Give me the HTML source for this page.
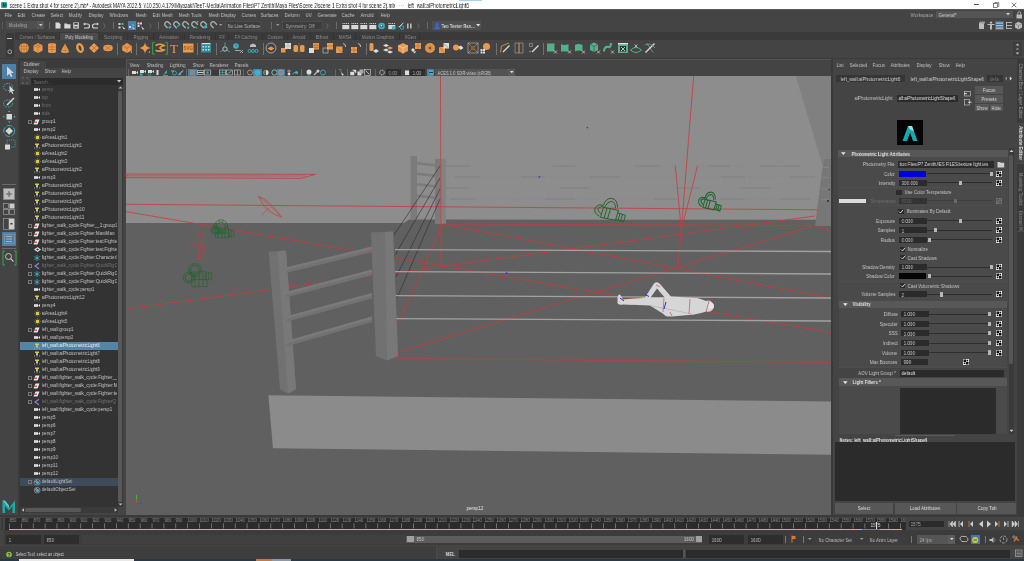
<!DOCTYPE html>
<html><head><meta charset="utf-8">
<style>
*{box-sizing:border-box;margin:0;padding:0}
html,body{width:1024px;height:561px;overflow:hidden;background:#444;font-family:"Liberation Sans",sans-serif;position:relative}
.a{position:absolute}
.t{position:absolute;white-space:nowrap;line-height:1;will-change:transform;padding:0 1.5px}
svg{overflow:visible}
</style></head><body>
<div class="a" style="left:0px;top:0px;width:1024px;height:9px;background:#ffffff;"></div>
<div class="a" style="left:1px;top:2px;width:6px;height:6px;background:#27a59f;border-radius:1px"></div>
<span class="t" style="left:0.70px;top:2.50px;font-size:5px;color:#0a3a3a;font-weight:bold;transform:scaleX(0.9);transform-origin:1.5px 0;">M</span>
<span class="t" style="left:7.50px;top:1.50px;font-size:7px;color:#1a1a1a;transform:scaleX(0.672);transform-origin:1.5px 0;">scene 1 Extra shot 4 for scene 2).mb* - Autodesk MAYA 2022.5: \\10.250.4.179\Miyazaki\TeeT-Media\Animation Files\P7 Zenith\Maya Files\Scene 2\scene 1 Extra shot 4 for scene 2).mb</span>
<span class="t" style="left:396.50px;top:2.00px;font-size:6px;color:#777;transform:scaleX(1.0);transform-origin:1.5px 0;">···</span>
<div class="a" style="left:458.5px;top:0px;width:23.5px;height:1px;background:#a8d0f0;"></div>
<span class="t" style="left:405.50px;top:1.50px;font-size:7px;color:#1a1a1a;transform:scaleX(0.69);transform-origin:1.5px 0;">left_wall:aiPhotometricLight6</span>
<div class="a" style="left:974px;top:4px;width:5px;height:0.8px;background:#555;"></div>
<svg class="a" style="left:993px;top:2px;" width="7" height="6" viewBox="0 0 7 6"><rect x="0.5" y="1.5" width="4" height="4" fill="none" stroke="#555" stroke-width="0.7"/><path d="M1.8 1.5V0.5H5.8V4.5H4.5" stroke="#555" stroke-width="0.7" fill="none"/></svg>
<svg class="a" style="left:1011px;top:2px;" width="6" height="6" viewBox="0 0 6 6"><path d="M0.7 0.7L5.3 5.3M5.3 0.7L0.7 5.3" stroke="#444" stroke-width="0.7"/></svg>
<div class="a" style="left:0px;top:9px;width:1024px;height:12px;background:#444444;"></div>
<div class="a" style="left:0px;top:9px;width:1024px;height:1px;background:#5a5a5a;"></div>
<span class="t" style="left:2.50px;top:13.00px;font-size:5.6px;color:#c0c0c0;transform:scaleX(0.8142857142857144);transform-origin:1.5px 0;">File</span>
<span class="t" style="left:15.50px;top:13.00px;font-size:5.6px;color:#c0c0c0;transform:scaleX(0.8142857142857144);transform-origin:1.5px 0;">Edit</span>
<span class="t" style="left:29.50px;top:13.00px;font-size:5.6px;color:#c0c0c0;transform:scaleX(0.8142857142857144);transform-origin:1.5px 0;">Create</span>
<span class="t" style="left:48.50px;top:13.00px;font-size:5.6px;color:#c0c0c0;transform:scaleX(0.8142857142857144);transform-origin:1.5px 0;">Select</span>
<span class="t" style="left:66.50px;top:13.00px;font-size:5.6px;color:#c0c0c0;transform:scaleX(0.8142857142857144);transform-origin:1.5px 0;">Modify</span>
<span class="t" style="left:86.50px;top:13.00px;font-size:5.6px;color:#c0c0c0;transform:scaleX(0.8142857142857144);transform-origin:1.5px 0;">Display</span>
<span class="t" style="left:107.50px;top:13.00px;font-size:5.6px;color:#c0c0c0;transform:scaleX(0.8142857142857144);transform-origin:1.5px 0;">Windows</span>
<span class="t" style="left:133.50px;top:13.00px;font-size:5.6px;color:#c0c0c0;transform:scaleX(0.8142857142857144);transform-origin:1.5px 0;">Mesh</span>
<span class="t" style="left:150.50px;top:13.00px;font-size:5.6px;color:#c0c0c0;transform:scaleX(0.8142857142857144);transform-origin:1.5px 0;">Edit Mesh</span>
<span class="t" style="left:176.50px;top:13.00px;font-size:5.6px;color:#c0c0c0;transform:scaleX(0.8142857142857144);transform-origin:1.5px 0;">Mesh Tools</span>
<span class="t" style="left:206.50px;top:13.00px;font-size:5.6px;color:#c0c0c0;transform:scaleX(0.8142857142857144);transform-origin:1.5px 0;">Mesh Display</span>
<span class="t" style="left:239.50px;top:13.00px;font-size:5.6px;color:#c0c0c0;transform:scaleX(0.8142857142857144);transform-origin:1.5px 0;">Curves</span>
<span class="t" style="left:258.50px;top:13.00px;font-size:5.6px;color:#c0c0c0;transform:scaleX(0.8142857142857144);transform-origin:1.5px 0;">Surfaces</span>
<span class="t" style="left:282.50px;top:13.00px;font-size:5.6px;color:#c0c0c0;transform:scaleX(0.8142857142857144);transform-origin:1.5px 0;">Deform</span>
<span class="t" style="left:303.50px;top:13.00px;font-size:5.6px;color:#c0c0c0;transform:scaleX(0.8142857142857144);transform-origin:1.5px 0;">UV</span>
<span class="t" style="left:315.50px;top:13.00px;font-size:5.6px;color:#c0c0c0;transform:scaleX(0.8142857142857144);transform-origin:1.5px 0;">Generate</span>
<span class="t" style="left:339.50px;top:13.00px;font-size:5.6px;color:#c0c0c0;transform:scaleX(0.8142857142857144);transform-origin:1.5px 0;">Cache</span>
<span class="t" style="left:358.50px;top:13.00px;font-size:5.6px;color:#c0c0c0;transform:scaleX(0.8142857142857144);transform-origin:1.5px 0;">Arnold</span>
<span class="t" style="left:378.50px;top:13.00px;font-size:5.6px;color:#c0c0c0;transform:scaleX(0.8142857142857144);transform-origin:1.5px 0;">Help</span>
<span class="t" style="left:908.50px;top:13.00px;font-size:5.6px;color:#a8a8a8;transform:scaleX(0.8142857142857144);transform-origin:1.5px 0;">Workspace:</span>
<div class="a" style="left:936px;top:11px;width:77px;height:7px;background:#555555;"></div>
<span class="t" style="left:936.50px;top:12.80px;font-size:5.6px;color:#cccccc;transform:scaleX(0.8142857142857144);transform-origin:1.5px 0;">General*</span>
<svg class="a" style="left:1006px;top:13px;" width="5" height="3" viewBox="0 0 5 3"><path d="M0 0H4L2 2.5Z" fill="#ccc"/></svg>
<svg class="a" style="left:1016px;top:11px;" width="7" height="8" viewBox="0 0 7 8"><rect x="0.5" y="3.5" width="5.5" height="4" fill="#bbb"/><path d="M1.8 3.6V2.2A1.45 1.45 0 0 1 4.7 2.2V3.6" stroke="#bbb" fill="none" stroke-width="0.9"/></svg>
<div class="a" style="left:0px;top:21px;width:1024px;height:10px;background:#444444;"></div>
<div class="a" style="left:2px;top:22px;width:1px;height:7px;background:#5a5a5a;"></div>
<div class="a" style="left:6px;top:21px;width:38px;height:8px;background:#4f4f4f;"></div>
<div class="a" style="left:37px;top:21px;width:7px;height:8px;background:#575757;"></div>
<span class="t" style="left:6.50px;top:23.00px;font-size:5.6px;color:#a8a8a8;transform:scaleX(0.8142857142857144);transform-origin:1.5px 0;">Modeling</span>
<svg class="a" style="left:39px;top:24px;" width="4" height="3" viewBox="0 0 4 3"><path d="M0 0H3.6L1.8 2.2Z" fill="#ccc"/></svg>
<div class="a" style="left:49px;top:22px;width:1px;height:7px;background:#6a6a6a;"></div>
<svg class="a" style="left:55px;top:22px;" width="6" height="7" viewBox="0 0 6 7"><path d="M0.5 0.5H3.8L5.5 2.2V6.5H0.5Z" fill="#d8d8d8"/></svg>
<svg class="a" style="left:64px;top:23px;" width="7" height="6" viewBox="0 0 7 6"><path d="M0.3 0.5H2.8L3.5 1.3H6.5V5.5H0.3Z" fill="#d8d8d8"/></svg>
<svg class="a" style="left:73px;top:22px;" width="6" height="7" viewBox="0 0 6 7"><rect x="0.3" y="0.3" width="5.5" height="6.3" fill="#d8d8d8"/><rect x="1.3" y="0.8" width="3.4" height="2" fill="#444"/><rect x="1.5" y="4" width="3" height="2" fill="#777"/></svg>
<svg class="a" style="left:83px;top:23px;" width="7" height="6" viewBox="0 0 7 6"><path d="M2 1H4.5A2 2 0 0 1 4.5 5H1" stroke="#d8d8d8" fill="none" stroke-width="1.1"/><path d="M0 1L2.2 -0.5V2.5Z" fill="#d8d8d8"/></svg>
<svg class="a" style="left:92px;top:23px;" width="7" height="6" viewBox="0 0 7 6"><path d="M5 1H2.5A2 2 0 0 0 2.5 5H6" stroke="#d8d8d8" fill="none" stroke-width="1.1"/><path d="M7 1L4.8 -0.5V2.5Z" fill="#d8d8d8"/></svg>
<svg class="a" style="left:103px;top:23px;" width="3" height="6" viewBox="0 0 3 6"><path d="M0.5 0.5L2.2 3L0.5 5.5" stroke="#777" stroke-width="0.7" fill="none"/></svg>
<div class="a" style="left:113px;top:22px;width:1px;height:7px;background:#6a6a6a;"></div>
<svg class="a" style="left:118px;top:22px;" width="8" height="8" viewBox="0 0 8 8"><rect x="0.5" y="1" width="2" height="2" fill="#d8d8d8"/><rect x="0.5" y="4.5" width="2" height="2" fill="#d8d8d8"/><rect x="3.5" y="1" width="2" height="2" fill="#39b5c4"/><path d="M4 4L7.5 7L5.5 7.2Z" fill="#d8d8d8"/></svg>
<div class="a" style="left:128px;top:21px;width:8px;height:9px;background:#4f7fa6;"></div>
<svg class="a" style="left:128px;top:22px;" width="8" height="8" viewBox="0 0 8 8"><rect x="1" y="4" width="2" height="2" fill="#d8d8d8"/><rect x="4" y="2" width="2" height="2" fill="#39b5c4"/><path d="M4 4.5L7 7L5 7Z" fill="#d8d8d8"/></svg>
<svg class="a" style="left:137px;top:22px;" width="8" height="8" viewBox="0 0 8 8"><rect x="0.5" y="0.5" width="2" height="2" fill="#d8d8d8"/><rect x="3" y="0.5" width="2" height="2" fill="#d8d8d8"/><rect x="0.5" y="3" width="2" height="2" fill="#d8d8d8"/><path d="M4 4L7.5 7.3L5.5 7.5Z" fill="#d8d8d8"/></svg>
<svg class="a" style="left:149px;top:23px;" width="3" height="6" viewBox="0 0 3 6"><path d="M0.5 0.5L2.2 3L0.5 5.5" stroke="#777" stroke-width="0.7" fill="none"/></svg>
<div class="a" style="left:158px;top:22px;width:1px;height:7px;background:#6a6a6a;"></div>
<svg class="a" style="left:163.5px;top:21px;" width="8" height="8" viewBox="0 0 8 8"><path d="M3.6 7L1.4 4.8A2.3 2.3 0 0 1 4.7 1.5L6.9 3.7" stroke="#b0b0b0" stroke-width="1.3" fill="none"/><path d="M4 6.5L6.5 4.5L7.5 6.5L5.5 7.8Z" fill="#39b5c4"/></svg>
<svg class="a" style="left:172.9px;top:21px;" width="8" height="8" viewBox="0 0 8 8"><path d="M3.6 7L1.4 4.8A2.3 2.3 0 0 1 4.7 1.5L6.9 3.7" stroke="#b0b0b0" stroke-width="1.3" fill="none"/><path d="M4.2 5.8L7.5 2.8" stroke="#39b5c4" stroke-width="1.1"/><circle cx="3.5" cy="7" r="0.7" fill="#39b5c4"/></svg>
<svg class="a" style="left:181.6px;top:21px;" width="8" height="8" viewBox="0 0 8 8"><path d="M3.6 7L1.4 4.8A2.3 2.3 0 0 1 4.7 1.5L6.9 3.7" stroke="#b0b0b0" stroke-width="1.3" fill="none"/><rect x="5.2" y="5.6" width="2" height="2" fill="#39b5c4"/></svg>
<svg class="a" style="left:191px;top:21px;" width="8" height="8" viewBox="0 0 8 8"><path d="M3.6 7L1.4 4.8A2.3 2.3 0 0 1 4.7 1.5L6.9 3.7" stroke="#b0b0b0" stroke-width="1.3" fill="none"/><path d="M5 5L6.5 7.5L4 6.8Z" fill="#39b5c4"/><rect x="5.8" y="0" width="1.6" height="1.6" fill="#39b5c4"/></svg>
<svg class="a" style="left:200.4px;top:21px;" width="8" height="8" viewBox="0 0 8 8"><path d="M3.6 7L1.4 4.8A2.3 2.3 0 0 1 4.7 1.5L6.9 3.7" stroke="#b0b0b0" stroke-width="1.3" fill="none"/><path d="M3.5 5.5L6.5 3.5L7.5 6.5L5 7.8Z" fill="#39b5c4"/></svg>
<svg class="a" style="left:209.75px;top:21px;" width="8" height="8" viewBox="0 0 8 8"><path d="M3.6 7L1.4 4.8A2.3 2.3 0 0 1 4.7 1.5L6.9 3.7" stroke="#b0b0b0" stroke-width="1.3" fill="none"/></svg>
<svg class="a" style="left:219px;top:24px;" width="4" height="3" viewBox="0 0 4 3"><path d="M0 0H3.5L1.75 2Z" fill="#999"/></svg>
<div class="a" style="left:225px;top:21px;width:36px;height:9px;background:#3d3d3d;border:1px solid #4c4c4c"></div>
<span class="t" style="left:225.50px;top:23.50px;font-size:5.6px;color:#bdbdbd;transform:scaleX(0.8142857142857144);transform-origin:1.5px 0;">No Live Surface</span>
<div class="a" style="left:270.5px;top:22px;width:1px;height:7px;background:#6a6a6a;"></div>
<svg class="a" style="left:276px;top:24px;" width="4" height="3" viewBox="0 0 4 3"><path d="M0 0H3.5L1.75 2Z" fill="#999"/></svg>
<div class="a" style="left:282px;top:21px;width:41px;height:9px;background:#3d3d3d;border:1px solid #4c4c4c"></div>
<span class="t" style="left:283.50px;top:23.50px;font-size:5.6px;color:#a8a8a8;transform:scaleX(0.8142857142857144);transform-origin:1.5px 0;">Symmetry: Off</span>
<svg class="a" style="left:326px;top:23px;" width="3" height="6" viewBox="0 0 3 6"><path d="M0.5 0.5L2.2 3L0.5 5.5" stroke="#777" stroke-width="0.7" fill="none"/></svg>
<div class="a" style="left:336px;top:22px;width:1px;height:7px;background:#6a6a6a;"></div>
<svg class="a" style="left:342px;top:22px;" width="8" height="8" viewBox="0 0 8 8"><path d="M0.5 1.5H7" stroke="#d8d8d8" stroke-width="1" stroke-dasharray="1 0.8"/><rect x="0.3" y="3" width="7" height="4.2" fill="#d8d8d8"/></svg>
<svg class="a" style="left:351px;top:22px;" width="8" height="8" viewBox="0 0 8 8"><path d="M0.5 1.5H7" stroke="#d8d8d8" stroke-width="1" stroke-dasharray="1 0.8"/><rect x="0.3" y="3" width="7" height="4.2" fill="#d8d8d8"/></svg>
<svg class="a" style="left:360px;top:22px;" width="8" height="8" viewBox="0 0 8 8"><path d="M0.5 1.5H7" stroke="#d8d8d8" stroke-width="1" stroke-dasharray="1 0.8"/><rect x="0.3" y="3" width="7" height="4.2" fill="#d8d8d8"/></svg>
<svg class="a" style="left:369px;top:22px;" width="8" height="8" viewBox="0 0 8 8"><path d="M0.5 1.5H7" stroke="#d8d8d8" stroke-width="1" stroke-dasharray="1 0.8"/><rect x="0.3" y="3" width="7" height="4.2" fill="#d8d8d8"/></svg>
<svg class="a" style="left:378px;top:22px;" width="8" height="8" viewBox="0 0 8 8"><circle cx="3.6" cy="4" r="3.3" fill="#39b5c4"/><circle cx="3.6" cy="4" r="1.7" fill="#3a6a70"/><circle cx="3.4" cy="3.6" r="0.8" fill="#eee"/></svg>
<svg class="a" style="left:388px;top:22px;" width="8" height="8" viewBox="0 0 8 8"><path d="M0.5 1.5H7" stroke="#d8d8d8" stroke-width="1" stroke-dasharray="1 0.8"/><rect x="0.3" y="3" width="7" height="4.2" fill="#d8d8d8"/><circle cx="5.5" cy="5.8" r="1.8" fill="#39b5c4"/></svg>
<svg class="a" style="left:397px;top:22px;" width="8" height="8" viewBox="0 0 8 8"><path d="M2 5L6.5 0.8" stroke="#d8d8d8" stroke-width="1"/><circle cx="5" cy="5.5" r="1.8" fill="none" stroke="#39b5c4" stroke-width="0.9"/><circle cx="1.2" cy="4.8" r="0.6" fill="#39b5c4"/></svg>
<svg class="a" style="left:406px;top:22px;" width="7" height="8" viewBox="0 0 7 8"><rect x="1" y="1.5" width="1.6" height="5" fill="#bbb"/><rect x="4" y="1.5" width="1.6" height="5" fill="#bbb"/></svg>
<svg class="a" style="left:417px;top:23px;" width="3" height="6" viewBox="0 0 3 6"><path d="M0.5 0.5L2.2 3L0.5 5.5" stroke="#777" stroke-width="0.7" fill="none"/></svg>
<div class="a" style="left:427px;top:22px;width:1px;height:7px;background:#6a6a6a;"></div>
<div class="a" style="left:432px;top:21px;width:49px;height:9px;background:#4f4f4f;"></div>
<svg class="a" style="left:434px;top:22px;" width="6" height="8" viewBox="0 0 6 8"><circle cx="3" cy="2.5" r="1.8" fill="#3f64c8"/><path d="M0.3 7.5V6A2.7 2 0 0 1 5.7 6V7.5Z" fill="#3f64c8"/></svg>
<span class="t" style="left:439.50px;top:23.50px;font-size:5.6px;color:#d0d0d0;font-weight:bold;transform:scaleX(0.7499999999999999);transform-origin:1.5px 0;">Teo Teeter Ran...</span>
<svg class="a" style="left:475.5px;top:24px;" width="5" height="3" viewBox="0 0 5 3"><path d="M0 0H4.4L2.2 2.4Z" fill="#ddd"/></svg>
<svg class="a" style="left:978px;top:21px;" width="8" height="9" viewBox="0 0 8 9"><rect x="1" y="1.5" width="5" height="6.5" fill="#bbb"/><rect x="2" y="0.5" width="5" height="2" fill="#999"/></svg>
<svg class="a" style="left:987px;top:21px;" width="8" height="9" viewBox="0 0 8 9"><circle cx="4" cy="1.6" r="1.2" fill="#bbb"/><path d="M0.5 3H7.5V4H5V8.5H3V4H0.5Z" fill="#bbb"/></svg>
<div class="a" style="left:995px;top:21px;width:9px;height:9px;background:#456f93;"></div>
<svg class="a" style="left:995px;top:21px;" width="9" height="9" viewBox="0 0 9 9"><rect x="1" y="1.5" width="7" height="1.3" fill="#bbb"/><rect x="1" y="4" width="7" height="1.3" fill="#bbb"/><rect x="1" y="6.5" width="7" height="1.3" fill="#bbb"/></svg>
<svg class="a" style="left:1005px;top:21px;" width="8" height="9" viewBox="0 0 8 9"><path d="M1 1.5H7M1 4.5H7M1 7.5H7M1.5 1V8" stroke="#bbb" stroke-width="0.9"/></svg>
<svg class="a" style="left:1014px;top:21px;" width="9" height="9" viewBox="0 0 9 9"><path d="M4.5 0.8L8 2.7V6.6L4.5 8.5L1 6.6V2.7Z" fill="#bbb"/><path d="M1 2.7L4.5 4.6L8 2.7M4.5 4.6V8.5" stroke="#777" stroke-width="0.6" fill="none"/></svg>
<div class="a" style="left:0px;top:32px;width:1024px;height:27px;background:#444444;"></div>
<div class="a" style="left:0px;top:58px;width:1024px;height:1px;background:#3a3a3a;"></div>
<div class="a" style="left:15px;top:32.3px;width:1009px;height:7.7px;background:#3a3a3a;"></div>
<div class="a" style="left:6px;top:33px;width:8px;height:24px;background:#393939;"></div>
<div class="a" style="left:7px;top:37.5px;width:5px;height:1.2px;background:#bbb;"></div>
<svg class="a" style="left:7px;top:49px;" width="6" height="6" viewBox="0 0 6 6"><circle cx="2.8" cy="2.8" r="1.9" fill="none" stroke="#bbb" stroke-width="0.8"/></svg>
<div class="a" style="left:59px;top:33px;width:1px;height:7px;background:#333;"></div>
<span class="t" style="left:37.0px;top:34.80px;font-size:5.6px;color:#8e8e8e;transform:translateX(-50%) scaleX(0.7928571428571428);transform-origin:50% 0;">Curves / Surfaces</span>
<div class="a" style="left:60px;top:33px;width:38px;height:7px;background:#4b4b4b;"></div>
<span class="t" style="left:79.0px;top:34.80px;font-size:5.6px;color:#d0d0d0;transform:translateX(-50%) scaleX(0.7928571428571428);transform-origin:50% 0;">Poly Modeling</span>
<div class="a" style="left:127px;top:33px;width:1px;height:7px;background:#333;"></div>
<span class="t" style="left:113.0px;top:34.80px;font-size:5.6px;color:#8e8e8e;transform:translateX(-50%) scaleX(0.7928571428571428);transform-origin:50% 0;">Sculpting</span>
<div class="a" style="left:153px;top:33px;width:1px;height:7px;background:#333;"></div>
<span class="t" style="left:140.5px;top:34.80px;font-size:5.6px;color:#8e8e8e;transform:translateX(-50%) scaleX(0.7928571428571428);transform-origin:50% 0;">Rigging</span>
<div class="a" style="left:184px;top:33px;width:1px;height:7px;background:#333;"></div>
<span class="t" style="left:169.0px;top:34.80px;font-size:5.6px;color:#8e8e8e;transform:translateX(-50%) scaleX(0.7928571428571428);transform-origin:50% 0;">Animation</span>
<div class="a" style="left:215px;top:33px;width:1px;height:7px;background:#333;"></div>
<span class="t" style="left:200.0px;top:34.80px;font-size:5.6px;color:#8e8e8e;transform:translateX(-50%) scaleX(0.7928571428571428);transform-origin:50% 0;">Rendering</span>
<div class="a" style="left:228px;top:33px;width:1px;height:7px;background:#333;"></div>
<span class="t" style="left:222.0px;top:34.80px;font-size:5.6px;color:#8e8e8e;transform:translateX(-50%) scaleX(0.7928571428571428);transform-origin:50% 0;">FX</span>
<div class="a" style="left:262px;top:33px;width:1px;height:7px;background:#333;"></div>
<span class="t" style="left:245.5px;top:34.80px;font-size:5.6px;color:#8e8e8e;transform:translateX(-50%) scaleX(0.7928571428571428);transform-origin:50% 0;">FX Caching</span>
<div class="a" style="left:287px;top:33px;width:1px;height:7px;background:#333;"></div>
<span class="t" style="left:275.0px;top:34.80px;font-size:5.6px;color:#8e8e8e;transform:translateX(-50%) scaleX(0.7928571428571428);transform-origin:50% 0;">Custom</span>
<div class="a" style="left:310px;top:33px;width:1px;height:7px;background:#333;"></div>
<span class="t" style="left:299.0px;top:34.80px;font-size:5.6px;color:#8e8e8e;transform:translateX(-50%) scaleX(0.7928571428571428);transform-origin:50% 0;">Arnold</span>
<div class="a" style="left:333px;top:33px;width:1px;height:7px;background:#333;"></div>
<span class="t" style="left:322.0px;top:34.80px;font-size:5.6px;color:#8e8e8e;transform:translateX(-50%) scaleX(0.7928571428571428);transform-origin:50% 0;">Bifrost</span>
<div class="a" style="left:355px;top:33px;width:1px;height:7px;background:#333;"></div>
<span class="t" style="left:344.5px;top:34.80px;font-size:5.6px;color:#8e8e8e;transform:translateX(-50%) scaleX(0.7928571428571428);transform-origin:50% 0;">MASH</span>
<div class="a" style="left:399px;top:33px;width:1px;height:7px;background:#333;"></div>
<span class="t" style="left:377.5px;top:34.80px;font-size:5.6px;color:#8e8e8e;transform:translateX(-50%) scaleX(0.7928571428571428);transform-origin:50% 0;">Motion Graphics</span>
<div class="a" style="left:419px;top:33px;width:1px;height:7px;background:#333;"></div>
<span class="t" style="left:409.5px;top:34.80px;font-size:5.6px;color:#8e8e8e;transform:translateX(-50%) scaleX(0.7928571428571428);transform-origin:50% 0;">XGen</span>
<div class="a" style="left:1013px;top:42px;width:9px;height:14px;background:#3d3d3d;"></div>
<svg class="a" style="left:1015px;top:43px;" width="5" height="12" viewBox="0 0 5 12"><path d="M0.5 2.5L2.5 0.5L4.5 2.5Z" fill="#bbb"/><circle cx="2.5" cy="6" r="1.3" fill="#777"/><path d="M0.5 9.5L2.5 11.5L4.5 9.5Z" fill="#bbb"/></svg>
<svg class="a" style="left:17.5px;top:42px;" width="12" height="12" viewBox="0 0 12 12"><circle cx="6" cy="6" r="4.8" fill="#e89a4e"/><path d="M1.5 4.5H10.5M1.2 7H10.8M6 1.2V10.8M3.5 2L3.5 10M8.5 2V10" stroke="#9a5a25" stroke-width="0.4"/></svg>
<svg class="a" style="left:31.5px;top:42px;" width="12" height="12" viewBox="0 0 12 12"><path d="M6 1L10.5 3.3V8.7L6 11L1.5 8.7V3.3Z" fill="#e89a4e"/><path d="M1.5 3.3L6 5.6L10.5 3.3M6 5.6V11M3.7 2.2L8.3 4.5M8.3 2.2L3.7 4.5" stroke="#9a5a25" stroke-width="0.4" fill="none"/></svg>
<svg class="a" style="left:45.5px;top:42px;" width="12" height="12" viewBox="0 0 12 12"><path d="M2 2.5A4 1.5 0 0 1 10 2.5V9.5A4 1.5 0 0 1 2 9.5Z" fill="#e89a4e"/><path d="M2 5H10M2 7.5H10M6 1V11" stroke="#9a5a25" stroke-width="0.4"/></svg>
<svg class="a" style="left:59.0px;top:42px;" width="12" height="12" viewBox="0 0 12 12"><path d="M6 1.5L10 9A4 2 0 0 1 2 9Z" fill="#e89a4e"/><path d="M6 1.5V11M2.5 8.5H9.5" stroke="#9a5a25" stroke-width="0.4"/></svg>
<svg class="a" style="left:73.5px;top:42px;" width="12" height="12" viewBox="0 0 12 12"><ellipse cx="6" cy="6" rx="3.8" ry="5" transform="rotate(-20 6 6)" fill="#e89a4e"/><ellipse cx="6" cy="6" rx="1.2" ry="2.8" transform="rotate(-20 6 6)" fill="#444"/></svg>
<svg class="a" style="left:87.5px;top:42px;" width="12" height="12" viewBox="0 0 12 12"><path d="M6 1L11 6L6 11L1 6Z" fill="#e89a4e"/><path d="M3.5 3.5L8.5 8.5M8.5 3.5L3.5 8.5" stroke="#9a5a25" stroke-width="0.5"/></svg>
<svg class="a" style="left:101.5px;top:42px;" width="12" height="12" viewBox="0 0 12 12"><ellipse cx="6" cy="6" rx="4.8" ry="3.2" fill="#e89a4e"/><path d="M3 4L9 8M9 4L3 8" stroke="#9a5a25" stroke-width="0.5"/></svg>
<div class="a" style="left:117px;top:43px;width:1px;height:12px;background:#707070;"></div>
<svg class="a" style="left:121.0px;top:42px;" width="12" height="12" viewBox="0 0 12 12"><path d="M6 1L10.8 4V8.5L6 11L1.2 8.5V4Z" fill="#e89a4e"/><path d="M1.2 4L6 6.5L10.8 4M6 6.5V11M3.5 2.5L6 6.5L8.5 2.5" stroke="#9a5a25" stroke-width="0.4" fill="none"/><path d="M9.5 10.5H11V9Z" fill="#ddd"/></svg>
<div class="a" style="left:136px;top:43px;width:1px;height:12px;background:#707070;"></div>
<svg class="a" style="left:139.0px;top:42px;" width="12" height="12" viewBox="0 0 12 12"><path d="M6 0.5Q6.8 5.2 11.5 6Q6.8 6.8 6 11.5Q5.2 6.8 0.5 6Q5.2 5.2 6 0.5Z" fill="#e89a4e"/><path d="M9.5 10.5H11V9Z" fill="#ddd"/></svg>
<svg class="a" style="left:152px;top:42px;" width="16" height="13" viewBox="0 0 16 13"><path d="M2.5 0.5H0.7V12.3H2.5M13.5 0.5H15.3V12.3H13.5" stroke="#2fae3c" stroke-width="1" fill="none"/><path d="M3.5 3.5Q8 1 12 3.5Q4 6 12 8Q8 10 3.5 8.5" stroke="#e89a4e" stroke-width="1.6" fill="none"/></svg>
<svg class="a" style="left:168px;top:42px;" width="12" height="12" viewBox="0 0 12 12"><text x="6" y="10.5" font-family="Liberation Serif" font-size="13" fill="#e89a4e" text-anchor="middle">T</text></svg>
<svg class="a" style="left:181.5px;top:42px;" width="12" height="12" viewBox="0 0 12 12"><rect x="1" y="1.5" width="10.5" height="9" fill="#e89a4e"/><text x="6.2" y="8" font-family="Liberation Sans" font-size="4.5" font-weight="bold" fill="#9a5a25" text-anchor="middle">SVG</text></svg>
<div class="a" style="left:196.5px;top:43px;width:1px;height:12px;background:#707070;"></div>
<svg class="a" style="left:200.0px;top:42px;" width="12" height="12" viewBox="0 0 12 12"><rect x="1" y="1.5" width="10" height="9" fill="#2e8e9c"/><rect x="1.6" y="1" width="8.8" height="1.2" fill="#ddd"/><path d="M2.5 4H4V5.5H2.5ZM5.3 4H6.8V5.5H5.3ZM8 4H9.5V5.5H8ZM2.5 7H4V8.5H2.5ZM5.3 7H6.8V8.5H5.3ZM8 7H9.5V8.5H8Z" fill="#ddd"/></svg>
<div class="a" style="left:215.6px;top:43px;width:1px;height:12px;background:#707070;"></div>
<svg class="a" style="left:219.0px;top:42px;" width="12" height="12" viewBox="0 0 12 12"><circle cx="6" cy="7" r="2.2" fill="none" stroke="#ddd" stroke-width="0.8"/><path d="M6 0.5V5M1 10L4.5 8M11 10L7.5 8" stroke="#39b5c4" stroke-width="0.8"/></svg>
<svg class="a" style="left:232.0px;top:42px;" width="12" height="12" viewBox="0 0 12 12"><circle cx="4" cy="4" r="2.8" fill="#39b5c4"/><path d="M4 2.5V4H5.3" stroke="#444" stroke-width="0.6" fill="none"/><path d="M3 8.5H8M8 8L11 11M11 8L8 11" stroke="#ccc" stroke-width="0.7"/></svg>
<svg class="a" style="left:247.0px;top:42px;" width="12" height="12" viewBox="0 0 12 12"><path d="M3 3L6 1.5L9 3V5H3Z" fill="#bbb"/><circle cx="2.5" cy="9" r="1.5" fill="none" stroke="#39b5c4" stroke-width="0.9"/><circle cx="6" cy="9" r="1.5" fill="none" stroke="#39b5c4" stroke-width="0.9"/><circle cx="9.5" cy="9" r="1.5" fill="none" stroke="#39b5c4" stroke-width="0.9"/></svg>
<div class="a" style="left:262.5px;top:43px;width:1px;height:12px;background:#707070;"></div>
<svg class="a" style="left:265.0px;top:42px;" width="12" height="12" viewBox="0 0 12 12"><circle cx="6" cy="6" r="5" fill="none" stroke="#bbb" stroke-width="0.8"/><path d="M2.5 6.5L6 4.5L9.5 6.5L6 8.5Z" fill="#e89a4e"/></svg>
<svg class="a" style="left:279.6px;top:42px;" width="12" height="12" viewBox="0 0 12 12"><rect x="1" y="6" width="4.5" height="4.5" fill="#e89a4e"/><rect x="5" y="1" width="6" height="6" fill="#ddd"/><path d="M5 4H11M8 1V7" stroke="#888" stroke-width="0.4"/></svg>
<svg class="a" style="left:293.0px;top:42px;" width="12" height="12" viewBox="0 0 12 12"><rect x="0.5" y="3" width="4.5" height="7" rx="1.5" fill="#e89a4e"/><rect x="7" y="3" width="4.5" height="7" rx="1.5" fill="#e89a4e"/><path d="M6 1V11" stroke="#999" stroke-width="0.4"/></svg>
<svg class="a" style="left:307.75px;top:42px;" width="12" height="12" viewBox="0 0 12 12"><rect x="5" y="1" width="6" height="6.5" fill="#e89a4e"/><rect x="1" y="6" width="5" height="5" fill="#ddd"/><path d="M7 1V7.5M9 1V7.5M5 3.5H11M5 5.5H11" stroke="#9a5a25" stroke-width="0.4"/></svg>
<svg class="a" style="left:321.5px;top:42px;" width="12" height="12" viewBox="0 0 12 12"><rect x="5" y="1" width="6" height="6.5" fill="#e89a4e"/><rect x="1" y="6" width="5" height="5" fill="none" stroke="#ccc" stroke-width="0.6"/><path d="M5 4H11" stroke="#9a5a25" stroke-width="0.5"/></svg>
<svg class="a" style="left:335.0px;top:42px;" width="12" height="12" viewBox="0 0 12 12"><rect x="1" y="4.5" width="6.5" height="6.5" fill="#e89a4e"/><path d="M8 1.5A3 3 0 0 1 10.5 5" stroke="#ddd" stroke-width="0.8" fill="none"/><path d="M1 4.5L7.5 11" stroke="#9a5a25" stroke-width="0.5"/></svg>
<svg class="a" style="left:349.6px;top:42px;" width="12" height="12" viewBox="0 0 12 12"><rect x="1" y="5" width="6" height="6" fill="#e89a4e"/><path d="M8 1.5A3 3 0 0 1 10.5 5" stroke="#ddd" stroke-width="0.8" fill="none"/><path d="M1 8H7M4 5V11" stroke="#9a5a25" stroke-width="0.5"/></svg>
<div class="a" style="left:365.6px;top:43px;width:1px;height:12px;background:#707070;"></div>
<svg class="a" style="left:367.75px;top:42px;" width="12" height="12" viewBox="0 0 12 12"><rect x="1.5" y="1" width="4" height="8" rx="1.5" fill="#e89a4e"/><path d="M5 9L8 7L11 9L8 11Z" fill="#ddd"/></svg>
<svg class="a" style="left:382.0px;top:42px;" width="12" height="12" viewBox="0 0 12 12"><path d="M1 3.5L4 2L7 3.5L4 5Z" fill="#ddd"/><path d="M5 6L8 4.5L11 6L8 7.5Z" fill="#e89a4e"/><path d="M1 8L4 6.5L7 8L4 9.5ZM5 10L8 8.5L11 10L8 11.5Z" fill="#ddd"/></svg>
<svg class="a" style="left:396.5px;top:42px;" width="12" height="12" viewBox="0 0 12 12"><path d="M6 1L11 3.5V9L6 11.5L1 9V3.5Z" fill="#e89a4e"/><path d="M1 3.5L6 6L11 3.5M6 6V11.5" stroke="#ddd" stroke-width="0.7" fill="none"/></svg>
<svg class="a" style="left:410.0px;top:42px;" width="12" height="12" viewBox="0 0 12 12"><rect x="5" y="1" width="6" height="6" fill="#e89a4e"/><path d="M1 8L3 6L5 8L3 10ZM3 10L5 11.5L6 9" fill="#ddd"/><path d="M8 1V7M5 4H11" stroke="#9a5a25" stroke-width="0.4"/></svg>
<svg class="a" style="left:424.0px;top:42px;" width="12" height="12" viewBox="0 0 12 12"><circle cx="6" cy="6" r="5" fill="#e89a4e"/><circle cx="6" cy="6" r="1.2" fill="#444"/><path d="M6 1V11M1 6H11M2.5 2.5L9.5 9.5M9.5 2.5L2.5 9.5" stroke="#9a5a25" stroke-width="0.4"/></svg>
<svg class="a" style="left:438.0px;top:42px;" width="12" height="12" viewBox="0 0 12 12"><rect x="1" y="5" width="6" height="6" fill="#e89a4e"/><rect x="5.5" y="1" width="5.5" height="5.5" fill="#ddd"/><path d="M1 5L7 11M6 2L10.5 6" stroke="#9a5a25" stroke-width="0.5"/></svg>
<svg class="a" style="left:452.0px;top:42px;" width="12" height="12" viewBox="0 0 12 12"><circle cx="4" cy="5.5" r="3" fill="#e89a4e"/><path d="M6 5L9 3.5L11.5 6L8.5 8Z" fill="#ddd"/></svg>
<svg class="a" style="left:466.5px;top:42px;" width="12" height="12" viewBox="0 0 12 12"><rect x="1" y="1" width="10" height="10" fill="none" stroke="#bbb" stroke-width="0.6"/><path d="M1 1L11 11M11 1L1 11" stroke="#bbb" stroke-width="0.5"/><circle cx="6" cy="6" r="2.2" fill="#9a5a25"/></svg>
<svg class="a" style="left:479.0px;top:42px;" width="12" height="12" viewBox="0 0 12 12"><circle cx="7.5" cy="4.5" r="3.5" fill="#e89a4e"/><path d="M1.5 7H3.5V9H1.5ZM4 7H6V9H4ZM1.5 9.5H3.5V11.5H1.5ZM4 9.5H6V11.5H4Z" fill="#ddd"/></svg>
<div class="a" style="left:496px;top:43px;width:1px;height:12px;background:#707070;"></div>
<svg class="a" style="left:499.0px;top:42px;" width="12" height="12" viewBox="0 0 12 12"><path d="M1.5 10.5L2.5 4L10 1" stroke="#e89a4e" stroke-width="0.8" fill="none"/><path d="M4 10L10.5 3.5" stroke="#ddd" stroke-width="1.3"/></svg>
<svg class="a" style="left:512.5px;top:42px;" width="12" height="12" viewBox="0 0 12 12"><path d="M2 1V11M10 1V11M2 1H10M2 11H10" stroke="#aaa" stroke-width="0.6" fill="none"/><path d="M6 1V11" stroke="#e89a4e" stroke-width="1"/></svg>
<svg class="a" style="left:527.5px;top:42px;" width="12" height="12" viewBox="0 0 12 12"><path d="M1.5 1.5H4.5V4.5H1.5Z" fill="none" stroke="#bbb" stroke-width="0.5"/><path d="M4 10L10.5 3.5" stroke="#ddd" stroke-width="1.3"/><circle cx="2" cy="9.5" r="0.7" fill="#e89a4e"/></svg>
<div class="a" style="left:543px;top:43px;width:1px;height:12px;background:#707070;"></div>
<svg class="a" style="left:546.0px;top:42px;" width="12" height="12" viewBox="0 0 12 12"><rect x="1" y="1.5" width="7.5" height="8" fill="#55b088"/><path d="M8 8.5L11 11.5M11 8.5L8 11.5" stroke="#ddd" stroke-width="0.7"/></svg>
<svg class="a" style="left:560.0px;top:42px;" width="12" height="12" viewBox="0 0 12 12"><path d="M1 2Q4.5 4 8.5 2V9.5H1Z" fill="#55b088"/><path d="M8 8.5L11 11.5M11 8.5L8 11.5" stroke="#ddd" stroke-width="0.7"/></svg>
<svg class="a" style="left:574.0px;top:42px;" width="12" height="12" viewBox="0 0 12 12"><path d="M1 3Q4 1 8.5 3V9.5Q5 7.5 1 9.5Z" fill="#55b088"/><path d="M8 8.5L11 11.5M11 8.5L8 11.5" stroke="#ddd" stroke-width="0.7"/></svg>
<svg class="a" style="left:588.5px;top:42px;" width="12" height="12" viewBox="0 0 12 12"><path d="M5 0.5L9 2.5V8L5 10L1 8V2.5Z" fill="#55b088"/><path d="M1 2.5L5 4.5L9 2.5M5 4.5V10" stroke="#444" stroke-width="0.6" fill="none"/><path d="M8 8.5L11 11.5M11 8.5L8 11.5" stroke="#ddd" stroke-width="0.7"/></svg>
<svg class="a" style="left:602.5px;top:42px;" width="12" height="12" viewBox="0 0 12 12"><path d="M1 9.5Q1 4.5 5 5Q8 5.5 8 1" stroke="#55b088" stroke-width="2.2" fill="none"/><path d="M8 8.5L11 11.5M11 8.5L8 11.5" stroke="#ddd" stroke-width="0.7"/></svg>
<svg class="a" style="left:616.6px;top:42px;" width="12" height="12" viewBox="0 0 12 12"><rect x="1" y="1" width="10" height="10" fill="#55b088"/><rect x="1" y="1" width="10" height="1.3" fill="#ddd"/><rect x="3" y="4" width="6" height="5.5" fill="#333"/><path d="M4 5L8 9M8 5L4 9" stroke="#ddd" stroke-width="0.8"/></svg>
<svg class="a" style="left:629.7px;top:42px;" width="12" height="12" viewBox="0 0 12 12"><path d="M0.5 8Q6 3 11.5 8M0.5 8Q6 13 11.5 8" stroke="#55b088" stroke-width="1" fill="none"/><path d="M4.5 2.5L7.5 5.5M7.5 2.5L4.5 5.5" stroke="#ddd" stroke-width="0.7"/></svg>
<svg class="a" style="left:644.0px;top:42px;" width="12" height="12" viewBox="0 0 12 12"><path d="M1.5 10.5L10.5 1.5" stroke="#ddd" stroke-width="1.2"/><path d="M1 3Q6 0 11 6" stroke="#55b088" stroke-width="0.8" fill="none"/><path d="M3 1.5L9 10.5" stroke="#ccc" stroke-width="0.5"/></svg>
<div class="a" style="left:0px;top:59px;width:18px;height:456px;background:#444444;"></div>
<div class="a" style="left:18px;top:59px;width:1.5px;height:456px;background:#393939;"></div>
<div class="a" style="left:1.5px;top:64px;width:14.5px;height:15px;background:#4b80aa;"></div>
<svg class="a" style="left:1.5px;top:64px;" width="15" height="15" viewBox="0 0 15 15"><path d="M5 2.5V12L7.2 9.8L9 13L10.5 12.2L8.8 9H11.8Z" fill="#d8d8d8"/></svg>
<svg class="a" style="left:1.5px;top:81px;" width="15" height="14" viewBox="0 0 15 14"><ellipse cx="6" cy="6" rx="4.5" ry="3.5" fill="none" stroke="#39b5c4" stroke-width="1" stroke-dasharray="1.4 1"/><path d="M7.5 4.5V12L9 10.5L10.3 13L11.3 12.5L10.2 10H12.5Z" fill="#d8d8d8"/></svg>
<svg class="a" style="left:1.5px;top:96px;" width="15" height="13" viewBox="0 0 15 13"><ellipse cx="6" cy="7.5" rx="4.5" ry="3.5" fill="none" stroke="#39b5c4" stroke-width="1" stroke-dasharray="1.4 1"/><path d="M5 9L12 2" stroke="#d8d8d8" stroke-width="1.5"/></svg>
<svg class="a" style="left:1.5px;top:110px;" width="15" height="13" viewBox="0 0 15 13"><rect x="4.5" y="4" width="5.5" height="5.5" fill="#d8d8d8"/><path d="M7.2 0.5L5.8 2H8.6ZM7.2 13L5.8 11.5H8.6ZM0.8 6.7L2.3 5.3V8.1ZM13.6 6.7L12.1 5.3V8.1Z" fill="#39b5c4"/></svg>
<svg class="a" style="left:1.5px;top:124px;" width="15" height="14" viewBox="0 0 15 14"><circle cx="7.2" cy="7" r="5.5" fill="none" stroke="#39b5c4" stroke-width="0.9" stroke-dasharray="6 1.5"/><path d="M7.2 3.2L11 7L7.2 10.8L3.4 7Z" fill="#d8d8d8"/></svg>
<svg class="a" style="left:1.5px;top:139px;" width="15" height="12" viewBox="0 0 15 12"><rect x="5" y="1" width="8" height="7" fill="none" stroke="#39b5c4" stroke-width="0.7" stroke-dasharray="1.2 0.8"/><rect x="3" y="5.5" width="5" height="5" fill="#d8d8d8"/></svg>
<div class="a" style="left:2px;top:184px;width:14px;height:1px;background:#6a6a6a;"></div>
<div class="a" style="left:3px;top:188px;width:11.5px;height:12px;background:#bdbdbd;border:1px solid #888"></div>
<svg class="a" style="left:3px;top:188px;" width="12" height="12" viewBox="0 0 12 12"><path d="M6 3L7 4.5H5ZM6 9L7 7.5H5ZM3 6L4.5 5V7ZM9 6L7.5 5V7Z" fill="#333"/><rect x="5.3" y="5.3" width="1.4" height="1.4" fill="#333"/></svg>
<svg class="a" style="left:3px;top:203px;" width="12" height="12" viewBox="0 0 12 12"><rect x="0.5" y="0.5" width="5" height="5" fill="none" stroke="#aaa" stroke-width="0.6"/><rect x="6.5" y="0.5" width="5" height="5" fill="#ccc"/><rect x="0.5" y="6.5" width="5" height="5" fill="none" stroke="#aaa" stroke-width="0.6"/><rect x="6.5" y="6.5" width="5" height="5" fill="none" stroke="#aaa" stroke-width="0.6"/></svg>
<svg class="a" style="left:3px;top:218px;" width="12" height="12" viewBox="0 0 12 12"><rect x="0.5" y="0.5" width="5.5" height="11" fill="none" stroke="#aaa" stroke-width="0.6"/><rect x="6" y="0.5" width="5.5" height="11" fill="#ccc"/><rect x="7.5" y="5" width="2" height="1.5" fill="#333"/></svg>
<div class="a" style="left:1.5px;top:232px;width:14.5px;height:14px;background:#4b80aa;"></div>
<svg class="a" style="left:1.5px;top:232px;" width="15" height="14" viewBox="0 0 15 14"><rect x="2.5" y="2.5" width="10" height="9" fill="none" stroke="#999" stroke-width="0.6"/><path d="M4 4.5H10M4 7H10M4 9.5H10" stroke="#bbb" stroke-width="0.8"/></svg>
<div class="a" style="left:2px;top:248px;width:14px;height:1px;background:#6a6a6a;"></div>
<svg class="a" style="left:1.5px;top:250px;" width="15" height="16" viewBox="0 0 15 16"><path d="M3 1H1V15H3M12 1H14V15H12" stroke="#2fae3c" stroke-width="1" fill="none"/><circle cx="6.5" cy="6.5" r="3" fill="none" stroke="#ccc" stroke-width="0.9"/><path d="M8.6 8.6L11.5 11.5" stroke="#ccc" stroke-width="1.1"/></svg>
<svg class="a" style="left:2px;top:499px;" width="14" height="15" viewBox="0 0 14 15"><path d="M0.5 14V1.5L7 9L13 1.5V14H10.5V7L7 11.5L3 7V14Z" fill="#1fa9a6"/><path d="M0.5 1.5L3 1.5L7 6.5L7 9Z" fill="#5fd3d0"/></svg>
<div class="a" style="left:19.5px;top:59px;width:106px;height:456px;background:#444444;"></div>
<div class="a" style="left:19.5px;top:59px;width:106px;height:1px;background:#3a3a3a;"></div>
<div class="a" style="left:19.5px;top:60px;width:106px;height:8px;background:#3b3b3b;"></div>
<div class="a" style="left:20px;top:60.5px;width:26px;height:7.5px;background:#444444;"></div>
<span class="t" style="left:21.50px;top:62.30px;font-size:5.6px;color:#cfcfcf;transform:scaleX(0.8142857142857144);transform-origin:1.5px 0;">Outliner</span>
<span class="t" style="left:21.50px;top:69.30px;font-size:5.6px;color:#c0c0c0;transform:scaleX(0.8142857142857144);transform-origin:1.5px 0;">Display</span>
<span class="t" style="left:42.50px;top:69.30px;font-size:5.6px;color:#c0c0c0;transform:scaleX(0.8142857142857144);transform-origin:1.5px 0;">Show</span>
<span class="t" style="left:59.50px;top:69.30px;font-size:5.6px;color:#c0c0c0;transform:scaleX(0.8142857142857144);transform-origin:1.5px 0;">Help</span>
<svg class="a" style="left:21.5px;top:77px;" width="6" height="8" viewBox="0 0 6 8"><path d="M0.5 2V0.5H2M4 0.5H5.5V2M5.5 5V6.5H4M2 6.5H0.5V5" stroke="#777" stroke-width="0.6" fill="none"/></svg>
<div class="a" style="left:31px;top:78px;width:91.5px;height:7px;background:#2b2b2b;"></div>
<span class="t" style="left:31.50px;top:79.50px;font-size:5.6px;color:#6e6e6e;transform:scaleX(0.8142857142857144);transform-origin:1.5px 0;">Search...</span>
<svg class="a" style="left:117px;top:80px;" width="5" height="3" viewBox="0 0 5 3"><path d="M0 0H4.2L2.1 2.4Z" fill="#ccc"/></svg>
<div class="a" style="left:20px;top:85px;width:98px;height:428px;background:#333333;"></div>
<div class="a" style="left:117.5px;top:85px;width:5px;height:422px;background:#3a3a3a;"></div>
<div class="a" style="left:118.3px;top:91px;width:3.4px;height:411px;background:#585858;border-radius:1.5px"></div>
<svg class="a" style="left:117.5px;top:86px;" width="5" height="3" viewBox="0 0 5 3"><path d="M0.5 2.5L2.5 0.5L4.5 2.5Z" fill="#bbb"/></svg>
<svg class="a" style="left:117.5px;top:503px;" width="5" height="3" viewBox="0 0 5 3"><path d="M0.5 0.5L2.5 2.5L4.5 0.5Z" fill="#bbb"/></svg>
<div class="a" style="left:20px;top:507px;width:98px;height:6px;background:#3a3a3a;"></div>
<div class="a" style="left:25px;top:508.2px;width:56px;height:3.4px;background:#585858;border-radius:1.5px"></div>
<svg class="a" style="left:21px;top:508px;" width="4" height="4" viewBox="0 0 4 4"><path d="M3 0.3L0.6 2L3 3.7Z" fill="#bbb"/></svg>
<svg class="a" style="left:114px;top:508px;" width="4" height="4" viewBox="0 0 4 4"><path d="M0.6 0.3L3 2L0.6 3.7Z" fill="#bbb"/></svg>
<svg class="a" style="left:34px;top:88.4px;" width="6" height="3" viewBox="0 0 6 3"><rect x="0" y="0.2" width="4" height="2.6" fill="#e0e0e0"/><path d="M4 1.5L6 0V3Z" fill="#e0e0e0"/></svg>
<div class="a" style="left:41.8px;top:85.90px;width:75.5px;height:8px;overflow:hidden">
<span class="t" style="left:-1.50px;top:1.30px;font-size:5.6px;color:#747474;transform:scaleX(0.82);transform-origin:1.5px 0;">persp</span>
</div>
<svg class="a" style="left:34px;top:96.4px;" width="6" height="3" viewBox="0 0 6 3"><rect x="0" y="0.2" width="4" height="2.6" fill="#e0e0e0"/><path d="M4 1.5L6 0V3Z" fill="#e0e0e0"/></svg>
<div class="a" style="left:41.8px;top:93.90px;width:75.5px;height:8px;overflow:hidden">
<span class="t" style="left:-1.50px;top:1.30px;font-size:5.6px;color:#747474;transform:scaleX(0.82);transform-origin:1.5px 0;">top</span>
</div>
<svg class="a" style="left:34px;top:104.4px;" width="6" height="3" viewBox="0 0 6 3"><rect x="0" y="0.2" width="4" height="2.6" fill="#e0e0e0"/><path d="M4 1.5L6 0V3Z" fill="#e0e0e0"/></svg>
<div class="a" style="left:41.8px;top:101.90px;width:75.5px;height:8px;overflow:hidden">
<span class="t" style="left:-1.50px;top:1.30px;font-size:5.6px;color:#747474;transform:scaleX(0.82);transform-origin:1.5px 0;">front</span>
</div>
<svg class="a" style="left:34px;top:112.4px;" width="6" height="3" viewBox="0 0 6 3"><rect x="0" y="0.2" width="4" height="2.6" fill="#e0e0e0"/><path d="M4 1.5L6 0V3Z" fill="#e0e0e0"/></svg>
<div class="a" style="left:41.8px;top:109.90px;width:75.5px;height:8px;overflow:hidden">
<span class="t" style="left:-1.50px;top:1.30px;font-size:5.6px;color:#747474;transform:scaleX(0.82);transform-origin:1.5px 0;">side</span>
</div>
<div class="a" style="left:28px;top:120.10000000000001px;width:3.6px;height:3.6px;background:transparent;border:0.6px solid #777"></div>
<svg class="a" style="left:33px;top:118.9px;" width="7" height="6" viewBox="0 0 7 6"><path d="M2.5 0.5H6.5L4.5 5.5H0.5Z" fill="#e8e8e8"/><path d="M0.3 3.2H4" stroke="#d8283a" stroke-width="1.1"/></svg>
<div class="a" style="left:41.8px;top:117.90px;width:75.5px;height:8px;overflow:hidden">
<span class="t" style="left:-1.50px;top:1.30px;font-size:5.6px;color:#c4c4c4;transform:scaleX(0.82);transform-origin:1.5px 0;">group1</span>
</div>
<svg class="a" style="left:34px;top:128.4px;" width="6" height="3" viewBox="0 0 6 3"><rect x="0" y="0.2" width="4" height="2.6" fill="#e0e0e0"/><path d="M4 1.5L6 0V3Z" fill="#e0e0e0"/></svg>
<div class="a" style="left:41.8px;top:125.90px;width:75.5px;height:8px;overflow:hidden">
<span class="t" style="left:-1.50px;top:1.30px;font-size:5.6px;color:#c4c4c4;transform:scaleX(0.82);transform-origin:1.5px 0;">persp2</span>
</div>
<svg class="a" style="left:33.5px;top:134.4px;" width="7" height="7" viewBox="0 0 7 7"><rect x="1.8" y="1.8" width="3.4" height="3.4" fill="#d8c83a"/><path d="M3.5 0V1M3.5 6V7M0 3.5H1M6 3.5H7M1 1L1.5 1.5M6 1L5.5 1.5M1 6L1.5 5.5M6 6L5.5 5.5" stroke="#999" stroke-width="0.5"/></svg>
<div class="a" style="left:41.8px;top:133.90px;width:75.5px;height:8px;overflow:hidden">
<span class="t" style="left:-1.50px;top:1.30px;font-size:5.6px;color:#c4c4c4;transform:scaleX(0.82);transform-origin:1.5px 0;">aiAreaLight1</span>
</div>
<svg class="a" style="left:33.5px;top:142.9px;" width="6" height="6.5" viewBox="0 0 6 6.5"><path d="M1 0.5H5V2H1Z" fill="#d9c84a"/><path d="M2 2H4V4.5H2Z" fill="#b8b8b8"/><path d="M0.5 4V6M5.5 4V6M3 5V6.5" stroke="#bbb" stroke-width="0.4"/></svg>
<div class="a" style="left:41.8px;top:141.90px;width:75.5px;height:8px;overflow:hidden">
<span class="t" style="left:-1.50px;top:1.30px;font-size:5.6px;color:#c4c4c4;transform:scaleX(0.82);transform-origin:1.5px 0;">aiPhotometricLight1</span>
</div>
<svg class="a" style="left:33.5px;top:150.4px;" width="7" height="7" viewBox="0 0 7 7"><rect x="1.8" y="1.8" width="3.4" height="3.4" fill="#d8c83a"/><path d="M3.5 0V1M3.5 6V7M0 3.5H1M6 3.5H7M1 1L1.5 1.5M6 1L5.5 1.5M1 6L1.5 5.5M6 6L5.5 5.5" stroke="#999" stroke-width="0.5"/></svg>
<div class="a" style="left:41.8px;top:149.90px;width:75.5px;height:8px;overflow:hidden">
<span class="t" style="left:-1.50px;top:1.30px;font-size:5.6px;color:#c4c4c4;transform:scaleX(0.82);transform-origin:1.5px 0;">aiAreaLight2</span>
</div>
<svg class="a" style="left:33.5px;top:158.4px;" width="7" height="7" viewBox="0 0 7 7"><rect x="1.8" y="1.8" width="3.4" height="3.4" fill="#d8c83a"/><path d="M3.5 0V1M3.5 6V7M0 3.5H1M6 3.5H7M1 1L1.5 1.5M6 1L5.5 1.5M1 6L1.5 5.5M6 6L5.5 5.5" stroke="#999" stroke-width="0.5"/></svg>
<div class="a" style="left:41.8px;top:157.90px;width:75.5px;height:8px;overflow:hidden">
<span class="t" style="left:-1.50px;top:1.30px;font-size:5.6px;color:#c4c4c4;transform:scaleX(0.82);transform-origin:1.5px 0;">aiAreaLight3</span>
</div>
<svg class="a" style="left:33.5px;top:166.9px;" width="6" height="6.5" viewBox="0 0 6 6.5"><path d="M1 0.5H5V2H1Z" fill="#d9c84a"/><path d="M2 2H4V4.5H2Z" fill="#b8b8b8"/><path d="M0.5 4V6M5.5 4V6M3 5V6.5" stroke="#bbb" stroke-width="0.4"/></svg>
<div class="a" style="left:41.8px;top:165.90px;width:75.5px;height:8px;overflow:hidden">
<span class="t" style="left:-1.50px;top:1.30px;font-size:5.6px;color:#c4c4c4;transform:scaleX(0.82);transform-origin:1.5px 0;">aiPhotometricLight2</span>
</div>
<svg class="a" style="left:34px;top:176.4px;" width="6" height="3" viewBox="0 0 6 3"><rect x="0" y="0.2" width="4" height="2.6" fill="#e0e0e0"/><path d="M4 1.5L6 0V3Z" fill="#e0e0e0"/></svg>
<div class="a" style="left:41.8px;top:173.90px;width:75.5px;height:8px;overflow:hidden">
<span class="t" style="left:-1.50px;top:1.30px;font-size:5.6px;color:#c4c4c4;transform:scaleX(0.82);transform-origin:1.5px 0;">persp3</span>
</div>
<svg class="a" style="left:33.5px;top:182.9px;" width="6" height="6.5" viewBox="0 0 6 6.5"><path d="M1 0.5H5V2H1Z" fill="#d9c84a"/><path d="M2 2H4V4.5H2Z" fill="#b8b8b8"/><path d="M0.5 4V6M5.5 4V6M3 5V6.5" stroke="#bbb" stroke-width="0.4"/></svg>
<div class="a" style="left:41.8px;top:181.90px;width:75.5px;height:8px;overflow:hidden">
<span class="t" style="left:-1.50px;top:1.30px;font-size:5.6px;color:#c4c4c4;transform:scaleX(0.82);transform-origin:1.5px 0;">aiPhotometricLight3</span>
</div>
<svg class="a" style="left:33.5px;top:190.9px;" width="6" height="6.5" viewBox="0 0 6 6.5"><path d="M1 0.5H5V2H1Z" fill="#d9c84a"/><path d="M2 2H4V4.5H2Z" fill="#b8b8b8"/><path d="M0.5 4V6M5.5 4V6M3 5V6.5" stroke="#bbb" stroke-width="0.4"/></svg>
<div class="a" style="left:41.8px;top:189.90px;width:75.5px;height:8px;overflow:hidden">
<span class="t" style="left:-1.50px;top:1.30px;font-size:5.6px;color:#c4c4c4;transform:scaleX(0.82);transform-origin:1.5px 0;">aiPhotometricLight4</span>
</div>
<svg class="a" style="left:33.5px;top:198.9px;" width="6" height="6.5" viewBox="0 0 6 6.5"><path d="M1 0.5H5V2H1Z" fill="#d9c84a"/><path d="M2 2H4V4.5H2Z" fill="#b8b8b8"/><path d="M0.5 4V6M5.5 4V6M3 5V6.5" stroke="#bbb" stroke-width="0.4"/></svg>
<div class="a" style="left:41.8px;top:197.90px;width:75.5px;height:8px;overflow:hidden">
<span class="t" style="left:-1.50px;top:1.30px;font-size:5.6px;color:#c4c4c4;transform:scaleX(0.82);transform-origin:1.5px 0;">aiPhotometricLight5</span>
</div>
<svg class="a" style="left:33.5px;top:206.9px;" width="6" height="6.5" viewBox="0 0 6 6.5"><path d="M1 0.5H5V2H1Z" fill="#d9c84a"/><path d="M2 2H4V4.5H2Z" fill="#b8b8b8"/><path d="M0.5 4V6M5.5 4V6M3 5V6.5" stroke="#bbb" stroke-width="0.4"/></svg>
<div class="a" style="left:41.8px;top:205.90px;width:75.5px;height:8px;overflow:hidden">
<span class="t" style="left:-1.50px;top:1.30px;font-size:5.6px;color:#c4c4c4;transform:scaleX(0.82);transform-origin:1.5px 0;">aiPhotometricLight10</span>
</div>
<svg class="a" style="left:33.5px;top:214.9px;" width="6" height="6.5" viewBox="0 0 6 6.5"><path d="M1 0.5H5V2H1Z" fill="#d9c84a"/><path d="M2 2H4V4.5H2Z" fill="#b8b8b8"/><path d="M0.5 4V6M5.5 4V6M3 5V6.5" stroke="#bbb" stroke-width="0.4"/></svg>
<div class="a" style="left:41.8px;top:213.90px;width:75.5px;height:8px;overflow:hidden">
<span class="t" style="left:-1.50px;top:1.30px;font-size:5.6px;color:#c4c4c4;transform:scaleX(0.82);transform-origin:1.5px 0;">aiPhotometricLight11</span>
</div>
<div class="a" style="left:28px;top:224.1px;width:3.6px;height:3.6px;background:transparent;border:0.6px solid #777"></div>
<svg class="a" style="left:33px;top:222.9px;" width="7" height="6" viewBox="0 0 7 6"><path d="M2.5 0.5H6.5L4.5 5.5H0.5Z" fill="#e8e8e8"/><path d="M0.3 3.2H4" stroke="#d8283a" stroke-width="1.1"/></svg>
<div class="a" style="left:41.8px;top:221.90px;width:75.5px;height:8px;overflow:hidden">
<span class="t" style="left:-1.50px;top:1.30px;font-size:5.6px;color:#c4c4c4;transform:scaleX(0.82);transform-origin:1.5px 0;">fighter_walk_cycle:Fighter__1:group1</span>
</div>
<div class="a" style="left:28px;top:232.1px;width:3.6px;height:3.6px;background:transparent;border:0.6px solid #777"></div>
<svg class="a" style="left:33px;top:230.9px;" width="7" height="6" viewBox="0 0 7 6"><path d="M2.5 0.5H6.5L4.5 5.5H0.5Z" fill="#e8e8e8"/><path d="M0.3 3.2H4" stroke="#d8283a" stroke-width="1.1"/></svg>
<div class="a" style="left:41.8px;top:229.90px;width:75.5px;height:8px;overflow:hidden">
<span class="t" style="left:-1.50px;top:1.30px;font-size:5.6px;color:#c4c4c4;transform:scaleX(0.82);transform-origin:1.5px 0;">fighter_walk_cycle:Fighter:ManiMan</span>
</div>
<div class="a" style="left:28px;top:240.1px;width:3.6px;height:3.6px;background:transparent;border:0.6px solid #777"></div>
<svg class="a" style="left:33px;top:238.9px;" width="7" height="6" viewBox="0 0 7 6"><path d="M2.5 0.5H6.5L4.5 5.5H0.5Z" fill="#e8e8e8"/><path d="M0.3 3.2H4" stroke="#d8283a" stroke-width="1.1"/></svg>
<div class="a" style="left:41.8px;top:237.90px;width:75.5px;height:8px;overflow:hidden">
<span class="t" style="left:-1.50px;top:1.30px;font-size:5.6px;color:#c4c4c4;transform:scaleX(0.82);transform-origin:1.5px 0;">fighter_walk_cycle:Fighter:test:Fighter</span>
</div>
<svg class="a" style="left:33.5px;top:247.4px;" width="7" height="5" viewBox="0 0 7 5"><path d="M3.5 0L7 2.5L3.5 5L0 2.5Z" fill="#ddd"/><path d="M3.5 1.5L5 2.5L3.5 3.5L2 2.5Z" fill="#333"/></svg>
<div class="a" style="left:41.8px;top:245.90px;width:75.5px;height:8px;overflow:hidden">
<span class="t" style="left:-1.50px;top:1.30px;font-size:5.6px;color:#c4c4c4;transform:scaleX(0.82);transform-origin:1.5px 0;">fighter_walk_cycle:Fighter:test:Fighter</span>
</div>
<svg class="a" style="left:34px;top:254.89999999999998px;" width="6" height="6" viewBox="0 0 6 6"><path d="M3 0V6M0.4 1.5L5.6 4.5M5.6 1.5L0.4 4.5" stroke="#3fc7d8" stroke-width="0.7"/></svg>
<div class="a" style="left:41.8px;top:253.90px;width:75.5px;height:8px;overflow:hidden">
<span class="t" style="left:-1.50px;top:1.30px;font-size:5.6px;color:#c4c4c4;transform:scaleX(0.82);transform-origin:1.5px 0;">fighter_walk_cycle:Fighter:Character1</span>
</div>
<div class="a" style="left:28px;top:264.09999999999997px;width:3.6px;height:3.6px;background:transparent;border:0.6px solid #777"></div>
<svg class="a" style="left:34px;top:262.9px;" width="6" height="6" viewBox="0 0 6 6"><path d="M5 0.3L1 3L5 5.7" stroke="#9a80dd" stroke-width="1.1" fill="none"/></svg>
<div class="a" style="left:41.8px;top:261.90px;width:75.5px;height:8px;overflow:hidden">
<span class="t" style="left:-1.50px;top:1.30px;font-size:5.6px;color:#747474;transform:scaleX(0.82);transform-origin:1.5px 0;">fighter_walk_cycle:Fighter:QuickRigC</span>
</div>
<div class="a" style="left:28px;top:272.09999999999997px;width:3.6px;height:3.6px;background:transparent;border:0.6px solid #777"></div>
<svg class="a" style="left:34px;top:270.9px;" width="6" height="6" viewBox="0 0 6 6"><path d="M3 0V6M0.4 1.5L5.6 4.5M5.6 1.5L0.4 4.5" stroke="#3fc7d8" stroke-width="0.7"/></svg>
<div class="a" style="left:41.8px;top:269.90px;width:75.5px;height:8px;overflow:hidden">
<span class="t" style="left:-1.50px;top:1.30px;font-size:5.6px;color:#c4c4c4;transform:scaleX(0.82);transform-origin:1.5px 0;">fighter_walk_cycle:Fighter:QuickRigC</span>
</div>
<div class="a" style="left:28px;top:280.09999999999997px;width:3.6px;height:3.6px;background:transparent;border:0.6px solid #777"></div>
<svg class="a" style="left:34px;top:278.9px;" width="6" height="6" viewBox="0 0 6 6"><path d="M3 0V6M0.4 1.5L5.6 4.5M5.6 1.5L0.4 4.5" stroke="#3fc7d8" stroke-width="0.7"/></svg>
<div class="a" style="left:41.8px;top:277.90px;width:75.5px;height:8px;overflow:hidden">
<span class="t" style="left:-1.50px;top:1.30px;font-size:5.6px;color:#c4c4c4;transform:scaleX(0.82);transform-origin:1.5px 0;">fighter_walk_cycle:Fighter:QuickRigC</span>
</div>
<svg class="a" style="left:34px;top:288.4px;" width="6" height="3" viewBox="0 0 6 3"><rect x="0" y="0.2" width="4" height="2.6" fill="#e0e0e0"/><path d="M4 1.5L6 0V3Z" fill="#e0e0e0"/></svg>
<div class="a" style="left:41.8px;top:285.90px;width:75.5px;height:8px;overflow:hidden">
<span class="t" style="left:-1.50px;top:1.30px;font-size:5.6px;color:#c4c4c4;transform:scaleX(0.82);transform-origin:1.5px 0;">fighter_walk_cycle:persp1</span>
</div>
<svg class="a" style="left:33.5px;top:294.9px;" width="6" height="6.5" viewBox="0 0 6 6.5"><path d="M1 0.5H5V2H1Z" fill="#d9c84a"/><path d="M2 2H4V4.5H2Z" fill="#b8b8b8"/><path d="M0.5 4V6M5.5 4V6M3 5V6.5" stroke="#bbb" stroke-width="0.4"/></svg>
<div class="a" style="left:41.8px;top:293.90px;width:75.5px;height:8px;overflow:hidden">
<span class="t" style="left:-1.50px;top:1.30px;font-size:5.6px;color:#c4c4c4;transform:scaleX(0.82);transform-origin:1.5px 0;">aiPhotometricLight12</span>
</div>
<svg class="a" style="left:34px;top:304.4px;" width="6" height="3" viewBox="0 0 6 3"><rect x="0" y="0.2" width="4" height="2.6" fill="#e0e0e0"/><path d="M4 1.5L6 0V3Z" fill="#e0e0e0"/></svg>
<div class="a" style="left:41.8px;top:301.90px;width:75.5px;height:8px;overflow:hidden">
<span class="t" style="left:-1.50px;top:1.30px;font-size:5.6px;color:#c4c4c4;transform:scaleX(0.82);transform-origin:1.5px 0;">persp4</span>
</div>
<svg class="a" style="left:33.5px;top:310.4px;" width="7" height="7" viewBox="0 0 7 7"><rect x="1.8" y="1.8" width="3.4" height="3.4" fill="#d8c83a"/><path d="M3.5 0V1M3.5 6V7M0 3.5H1M6 3.5H7M1 1L1.5 1.5M6 1L5.5 1.5M1 6L1.5 5.5M6 6L5.5 5.5" stroke="#999" stroke-width="0.5"/></svg>
<div class="a" style="left:41.8px;top:309.90px;width:75.5px;height:8px;overflow:hidden">
<span class="t" style="left:-1.50px;top:1.30px;font-size:5.6px;color:#c4c4c4;transform:scaleX(0.82);transform-origin:1.5px 0;">aiAreaLight4</span>
</div>
<svg class="a" style="left:33.5px;top:318.4px;" width="7" height="7" viewBox="0 0 7 7"><rect x="1.8" y="1.8" width="3.4" height="3.4" fill="#d8c83a"/><path d="M3.5 0V1M3.5 6V7M0 3.5H1M6 3.5H7M1 1L1.5 1.5M6 1L5.5 1.5M1 6L1.5 5.5M6 6L5.5 5.5" stroke="#999" stroke-width="0.5"/></svg>
<div class="a" style="left:41.8px;top:317.90px;width:75.5px;height:8px;overflow:hidden">
<span class="t" style="left:-1.50px;top:1.30px;font-size:5.6px;color:#c4c4c4;transform:scaleX(0.82);transform-origin:1.5px 0;">aiAreaLight5</span>
</div>
<div class="a" style="left:28px;top:328.09999999999997px;width:3.6px;height:3.6px;background:transparent;border:0.6px solid #777"></div>
<svg class="a" style="left:33px;top:326.9px;" width="7" height="6" viewBox="0 0 7 6"><path d="M2.5 0.5H6.5L4.5 5.5H0.5Z" fill="#e8e8e8"/><path d="M0.3 3.2H4" stroke="#d8283a" stroke-width="1.1"/></svg>
<div class="a" style="left:41.8px;top:325.90px;width:75.5px;height:8px;overflow:hidden">
<span class="t" style="left:-1.50px;top:1.30px;font-size:5.6px;color:#c4c4c4;transform:scaleX(0.82);transform-origin:1.5px 0;">left_wall:group1</span>
</div>
<svg class="a" style="left:34px;top:336.4px;" width="6" height="3" viewBox="0 0 6 3"><rect x="0" y="0.2" width="4" height="2.6" fill="#e0e0e0"/><path d="M4 1.5L6 0V3Z" fill="#e0e0e0"/></svg>
<div class="a" style="left:41.8px;top:333.90px;width:75.5px;height:8px;overflow:hidden">
<span class="t" style="left:-1.50px;top:1.30px;font-size:5.6px;color:#c4c4c4;transform:scaleX(0.82);transform-origin:1.5px 0;">left_wall:persp2</span>
</div>
<div class="a" style="left:20px;top:342.09999999999997px;width:97.5px;height:7.6px;background:#5285a6;"></div>
<svg class="a" style="left:33.5px;top:342.9px;" width="6" height="6.5" viewBox="0 0 6 6.5"><path d="M1 0.5H5V2H1Z" fill="#d9c84a"/><path d="M2 2H4V4.5H2Z" fill="#b8b8b8"/><path d="M0.5 4V6M5.5 4V6M3 5V6.5" stroke="#bbb" stroke-width="0.4"/></svg>
<div class="a" style="left:41.8px;top:341.90px;width:75.5px;height:8px;overflow:hidden">
<span class="t" style="left:-1.50px;top:1.30px;font-size:5.6px;color:#f0f0f0;transform:scaleX(0.82);transform-origin:1.5px 0;">left_wall:aiPhotometricLight6</span>
</div>
<svg class="a" style="left:33.5px;top:350.9px;" width="6" height="6.5" viewBox="0 0 6 6.5"><path d="M1 0.5H5V2H1Z" fill="#d9c84a"/><path d="M2 2H4V4.5H2Z" fill="#b8b8b8"/><path d="M0.5 4V6M5.5 4V6M3 5V6.5" stroke="#bbb" stroke-width="0.4"/></svg>
<div class="a" style="left:41.8px;top:349.90px;width:75.5px;height:8px;overflow:hidden">
<span class="t" style="left:-1.50px;top:1.30px;font-size:5.6px;color:#c4c4c4;transform:scaleX(0.82);transform-origin:1.5px 0;">left_wall:aiPhotometricLight7</span>
</div>
<svg class="a" style="left:33.5px;top:358.9px;" width="6" height="6.5" viewBox="0 0 6 6.5"><path d="M1 0.5H5V2H1Z" fill="#d9c84a"/><path d="M2 2H4V4.5H2Z" fill="#b8b8b8"/><path d="M0.5 4V6M5.5 4V6M3 5V6.5" stroke="#bbb" stroke-width="0.4"/></svg>
<div class="a" style="left:41.8px;top:357.90px;width:75.5px;height:8px;overflow:hidden">
<span class="t" style="left:-1.50px;top:1.30px;font-size:5.6px;color:#c4c4c4;transform:scaleX(0.82);transform-origin:1.5px 0;">left_wall:aiPhotometricLight8</span>
</div>
<svg class="a" style="left:33.5px;top:366.9px;" width="6" height="6.5" viewBox="0 0 6 6.5"><path d="M1 0.5H5V2H1Z" fill="#d9c84a"/><path d="M2 2H4V4.5H2Z" fill="#b8b8b8"/><path d="M0.5 4V6M5.5 4V6M3 5V6.5" stroke="#bbb" stroke-width="0.4"/></svg>
<div class="a" style="left:41.8px;top:365.90px;width:75.5px;height:8px;overflow:hidden">
<span class="t" style="left:-1.50px;top:1.30px;font-size:5.6px;color:#c4c4c4;transform:scaleX(0.82);transform-origin:1.5px 0;">left_wall:aiPhotometricLight9</span>
</div>
<div class="a" style="left:28px;top:376.09999999999997px;width:3.6px;height:3.6px;background:transparent;border:0.6px solid #777"></div>
<svg class="a" style="left:33px;top:374.9px;" width="7" height="6" viewBox="0 0 7 6"><path d="M2.5 0.5H6.5L4.5 5.5H0.5Z" fill="#e8e8e8"/><path d="M0.3 3.2H4" stroke="#d8283a" stroke-width="1.1"/></svg>
<div class="a" style="left:41.8px;top:373.90px;width:75.5px;height:8px;overflow:hidden">
<span class="t" style="left:-1.50px;top:1.30px;font-size:5.6px;color:#c4c4c4;transform:scaleX(0.82);transform-origin:1.5px 0;">left_wall:fighter_walk_cycle:Fighter__</span>
</div>
<div class="a" style="left:28px;top:384.09999999999997px;width:3.6px;height:3.6px;background:transparent;border:0.6px solid #777"></div>
<svg class="a" style="left:33px;top:382.9px;" width="7" height="6" viewBox="0 0 7 6"><path d="M2.5 0.5H6.5L4.5 5.5H0.5Z" fill="#e8e8e8"/><path d="M0.3 3.2H4" stroke="#d8283a" stroke-width="1.1"/></svg>
<div class="a" style="left:41.8px;top:381.90px;width:75.5px;height:8px;overflow:hidden">
<span class="t" style="left:-1.50px;top:1.30px;font-size:5.6px;color:#c4c4c4;transform:scaleX(0.82);transform-origin:1.5px 0;">left_wall:fighter_walk_cycle:Fighter:M</span>
</div>
<div class="a" style="left:28px;top:392.09999999999997px;width:3.6px;height:3.6px;background:transparent;border:0.6px solid #777"></div>
<svg class="a" style="left:33px;top:390.9px;" width="7" height="6" viewBox="0 0 7 6"><path d="M2.5 0.5H6.5L4.5 5.5H0.5Z" fill="#e8e8e8"/><path d="M0.3 3.2H4" stroke="#d8283a" stroke-width="1.1"/></svg>
<div class="a" style="left:41.8px;top:389.90px;width:75.5px;height:8px;overflow:hidden">
<span class="t" style="left:-1.50px;top:1.30px;font-size:5.6px;color:#c4c4c4;transform:scaleX(0.82);transform-origin:1.5px 0;">left_wall:fighter_walk_cycle:Fighter:te</span>
</div>
<div class="a" style="left:28px;top:400.09999999999997px;width:3.6px;height:3.6px;background:transparent;border:0.6px solid #777"></div>
<svg class="a" style="left:34px;top:398.9px;" width="6" height="6" viewBox="0 0 6 6"><path d="M5 0.3L1 3L5 5.7" stroke="#9a80dd" stroke-width="1.1" fill="none"/></svg>
<div class="a" style="left:41.8px;top:397.90px;width:75.5px;height:8px;overflow:hidden">
<span class="t" style="left:-1.50px;top:1.30px;font-size:5.6px;color:#747474;transform:scaleX(0.82);transform-origin:1.5px 0;">left_wall:fighter_walk_cycle:FighterQ</span>
</div>
<svg class="a" style="left:34px;top:408.4px;" width="6" height="3" viewBox="0 0 6 3"><rect x="0" y="0.2" width="4" height="2.6" fill="#e0e0e0"/><path d="M4 1.5L6 0V3Z" fill="#e0e0e0"/></svg>
<div class="a" style="left:41.8px;top:405.90px;width:75.5px;height:8px;overflow:hidden">
<span class="t" style="left:-1.50px;top:1.30px;font-size:5.6px;color:#c4c4c4;transform:scaleX(0.82);transform-origin:1.5px 0;">left_wall:fighter_walk_cycle:persp1</span>
</div>
<svg class="a" style="left:34px;top:416.4px;" width="6" height="3" viewBox="0 0 6 3"><rect x="0" y="0.2" width="4" height="2.6" fill="#e0e0e0"/><path d="M4 1.5L6 0V3Z" fill="#e0e0e0"/></svg>
<div class="a" style="left:41.8px;top:413.90px;width:75.5px;height:8px;overflow:hidden">
<span class="t" style="left:-1.50px;top:1.30px;font-size:5.6px;color:#c4c4c4;transform:scaleX(0.82);transform-origin:1.5px 0;">persp5</span>
</div>
<svg class="a" style="left:34px;top:424.4px;" width="6" height="3" viewBox="0 0 6 3"><rect x="0" y="0.2" width="4" height="2.6" fill="#e0e0e0"/><path d="M4 1.5L6 0V3Z" fill="#e0e0e0"/></svg>
<div class="a" style="left:41.8px;top:421.90px;width:75.5px;height:8px;overflow:hidden">
<span class="t" style="left:-1.50px;top:1.30px;font-size:5.6px;color:#c4c4c4;transform:scaleX(0.82);transform-origin:1.5px 0;">persp6</span>
</div>
<svg class="a" style="left:34px;top:432.4px;" width="6" height="3" viewBox="0 0 6 3"><rect x="0" y="0.2" width="4" height="2.6" fill="#e0e0e0"/><path d="M4 1.5L6 0V3Z" fill="#e0e0e0"/></svg>
<div class="a" style="left:41.8px;top:429.90px;width:75.5px;height:8px;overflow:hidden">
<span class="t" style="left:-1.50px;top:1.30px;font-size:5.6px;color:#c4c4c4;transform:scaleX(0.82);transform-origin:1.5px 0;">persp7</span>
</div>
<svg class="a" style="left:34px;top:440.4px;" width="6" height="3" viewBox="0 0 6 3"><rect x="0" y="0.2" width="4" height="2.6" fill="#e0e0e0"/><path d="M4 1.5L6 0V3Z" fill="#e0e0e0"/></svg>
<div class="a" style="left:41.8px;top:437.90px;width:75.5px;height:8px;overflow:hidden">
<span class="t" style="left:-1.50px;top:1.30px;font-size:5.6px;color:#c4c4c4;transform:scaleX(0.82);transform-origin:1.5px 0;">persp8</span>
</div>
<svg class="a" style="left:34px;top:448.4px;" width="6" height="3" viewBox="0 0 6 3"><rect x="0" y="0.2" width="4" height="2.6" fill="#e0e0e0"/><path d="M4 1.5L6 0V3Z" fill="#e0e0e0"/></svg>
<div class="a" style="left:41.8px;top:445.90px;width:75.5px;height:8px;overflow:hidden">
<span class="t" style="left:-1.50px;top:1.30px;font-size:5.6px;color:#c4c4c4;transform:scaleX(0.82);transform-origin:1.5px 0;">persp9</span>
</div>
<svg class="a" style="left:34px;top:456.4px;" width="6" height="3" viewBox="0 0 6 3"><rect x="0" y="0.2" width="4" height="2.6" fill="#e0e0e0"/><path d="M4 1.5L6 0V3Z" fill="#e0e0e0"/></svg>
<div class="a" style="left:41.8px;top:453.90px;width:75.5px;height:8px;overflow:hidden">
<span class="t" style="left:-1.50px;top:1.30px;font-size:5.6px;color:#c4c4c4;transform:scaleX(0.82);transform-origin:1.5px 0;">persp10</span>
</div>
<svg class="a" style="left:34px;top:464.4px;" width="6" height="3" viewBox="0 0 6 3"><rect x="0" y="0.2" width="4" height="2.6" fill="#e0e0e0"/><path d="M4 1.5L6 0V3Z" fill="#e0e0e0"/></svg>
<div class="a" style="left:41.8px;top:461.90px;width:75.5px;height:8px;overflow:hidden">
<span class="t" style="left:-1.50px;top:1.30px;font-size:5.6px;color:#c4c4c4;transform:scaleX(0.82);transform-origin:1.5px 0;">persp11</span>
</div>
<svg class="a" style="left:34px;top:472.4px;" width="6" height="3" viewBox="0 0 6 3"><rect x="0" y="0.2" width="4" height="2.6" fill="#e0e0e0"/><path d="M4 1.5L6 0V3Z" fill="#e0e0e0"/></svg>
<div class="a" style="left:41.8px;top:469.90px;width:75.5px;height:8px;overflow:hidden">
<span class="t" style="left:-1.50px;top:1.30px;font-size:5.6px;color:#c4c4c4;transform:scaleX(0.82);transform-origin:1.5px 0;">persp12</span>
</div>
<div class="a" style="left:20px;top:478.09999999999997px;width:97.5px;height:7.6px;background:#3d4b5a;"></div>
<div class="a" style="left:28px;top:480.09999999999997px;width:3.6px;height:3.6px;background:transparent;border:0.6px solid #777"></div>
<svg class="a" style="left:33.5px;top:478.9px;" width="6.5" height="6.5" viewBox="0 0 6.5 6.5"><circle cx="3.2" cy="3.2" r="2.9" fill="#444" stroke="#bbb" stroke-width="0.5"/><circle cx="3.5" cy="3.5" r="1.6" fill="#3bb6c6"/><path d="M1.2 3.2L3 1" stroke="#ddd" stroke-width="0.6"/></svg>
<div class="a" style="left:41.8px;top:477.90px;width:75.5px;height:8px;overflow:hidden">
<span class="t" style="left:-1.50px;top:1.30px;font-size:5.6px;color:#c4c4c4;transform:scaleX(0.82);transform-origin:1.5px 0;">defaultLightSet</span>
</div>
<svg class="a" style="left:33.5px;top:486.9px;" width="6.5" height="6.5" viewBox="0 0 6.5 6.5"><circle cx="3.2" cy="3.2" r="2.9" fill="#444" stroke="#bbb" stroke-width="0.5"/><circle cx="3.5" cy="3.5" r="1.6" fill="#3bb6c6"/><path d="M1.2 3.2L3 1" stroke="#ddd" stroke-width="0.6"/></svg>
<div class="a" style="left:41.8px;top:485.90px;width:75.5px;height:8px;overflow:hidden">
<span class="t" style="left:-1.50px;top:1.30px;font-size:5.6px;color:#c4c4c4;transform:scaleX(0.82);transform-origin:1.5px 0;">defaultObjectSet</span>
</div>
<div class="a" style="left:125.5px;top:59px;width:705.5px;height:17px;background:#444444;"></div>
<div class="a" style="left:125.5px;top:59px;width:705.5px;height:1.2px;background:#555555;"></div>
<div class="a" style="left:125.5px;top:59px;width:1px;height:456px;background:#555555;"></div>
<span class="t" style="left:128.10px;top:63.00px;font-size:5.6px;color:#c0c0c0;transform:scaleX(0.8142857142857144);transform-origin:1.5px 0;">View</span>
<span class="t" style="left:144.50px;top:63.00px;font-size:5.6px;color:#c0c0c0;transform:scaleX(0.8142857142857144);transform-origin:1.5px 0;">Shading</span>
<span class="t" style="left:167.50px;top:63.00px;font-size:5.6px;color:#c0c0c0;transform:scaleX(0.8142857142857144);transform-origin:1.5px 0;">Lighting</span>
<span class="t" style="left:190.50px;top:63.00px;font-size:5.6px;color:#c0c0c0;transform:scaleX(0.8142857142857144);transform-origin:1.5px 0;">Show</span>
<span class="t" style="left:208.10px;top:63.00px;font-size:5.6px;color:#c0c0c0;transform:scaleX(0.8142857142857144);transform-origin:1.5px 0;">Renderer</span>
<span class="t" style="left:232.50px;top:63.00px;font-size:5.6px;color:#c0c0c0;transform:scaleX(0.8142857142857144);transform-origin:1.5px 0;">Panels</span>
<div class="a" style="left:128px;top:69px;width:1px;height:7px;background:#666;"></div>
<svg class="a" style="left:132px;top:69px;" width="7" height="7" viewBox="0 0 7 7"><rect x="0" y="2" width="4" height="3" fill="#ddd"/><path d="M4 3.5L6 2V5Z" fill="#ddd"/></svg>
<svg class="a" style="left:140px;top:69px;" width="7" height="7" viewBox="0 0 7 7"><rect x="0" y="1" width="4" height="3" fill="#ddd"/><path d="M4 2.5L6 1V4Z" fill="#ddd"/><rect x="0" y="4.5" width="2.5" height="2" fill="#39b5c4"/></svg>
<svg class="a" style="left:148px;top:69px;" width="7" height="7" viewBox="0 0 7 7"><rect x="0" y="1" width="4" height="3" fill="#ddd"/><path d="M4 2.5L6 1V4Z" fill="#ddd"/><circle cx="1.5" cy="5.3" r="1.3" fill="none" stroke="#39b5c4" stroke-width="0.6"/></svg>
<svg class="a" style="left:156px;top:69px;" width="7" height="7" viewBox="0 0 7 7"><rect x="0.5" y="1" width="2" height="5" fill="#ddd"/></svg>
<svg class="a" style="left:163px;top:69px;" width="7" height="7" viewBox="0 0 7 7"><path d="M0.5 6L3.5 1L4 4Z" fill="#39b5c4"/><path d="M0 6.5H5" stroke="#bbb" stroke-width="0.5"/></svg>
<svg class="a" style="left:171px;top:69px;" width="7" height="7" viewBox="0 0 7 7"><circle cx="3.5" cy="4" r="2" fill="none" stroke="#39b5c4" stroke-width="0.8"/><path d="M0 2H3" stroke="#ddd" stroke-width="0.6"/></svg>
<svg class="a" style="left:178px;top:69px;" width="7" height="7" viewBox="0 0 7 7"><path d="M0.5 6L5 1.5" stroke="#ddd" stroke-width="1"/><circle cx="2" cy="5" r="1.2" fill="#39b5c4"/></svg>
<div class="a" style="left:185.6px;top:69px;width:1px;height:7px;background:#666;"></div>
<div class="a" style="left:188px;top:68.5px;width:8.5px;height:8px;background:#4b80aa;"></div>
<svg class="a" style="left:189px;top:69px;" width="7" height="7" viewBox="0 0 7 7"><rect x="1" y="1" width="5" height="5" fill="#888"/></svg>
<svg class="a" style="left:197px;top:69px;" width="7" height="7" viewBox="0 0 7 7"><rect x="0.5" y="1.5" width="6" height="4" fill="none" stroke="#ccc" stroke-width="0.6"/><rect x="0.5" y="3" width="6" height="1" fill="#ccc"/></svg>
<svg class="a" style="left:204px;top:69px;" width="7" height="7" viewBox="0 0 7 7"><rect x="0.5" y="1" width="6" height="5" fill="none" stroke="#ccc" stroke-width="0.6"/><rect x="2.5" y="2.5" width="2" height="2" fill="#39b5c4"/></svg>
<svg class="a" style="left:212px;top:69px;" width="7" height="7" viewBox="0 0 7 7"><rect x="0.5" y="1" width="6" height="5" fill="#3a3a3a"/></svg>
<svg class="a" style="left:219px;top:69px;" width="7" height="7" viewBox="0 0 7 7"><rect x="0.5" y="1" width="6" height="5" fill="none" stroke="#ccc" stroke-width="0.6"/><path d="M3.5 1V6M0.5 3.5H6.5" stroke="#39b5c4" stroke-width="0.6"/></svg>
<svg class="a" style="left:226px;top:69px;" width="7" height="7" viewBox="0 0 7 7"><rect x="0.5" y="1" width="6" height="5" fill="none" stroke="#ccc" stroke-width="0.6"/><path d="M1 5.5L6 1.5" stroke="#39b5c4" stroke-width="1"/></svg>
<svg class="a" style="left:234px;top:69px;" width="7" height="7" viewBox="0 0 7 7"><rect x="0.5" y="1" width="6" height="5" fill="none" stroke="#ccc" stroke-width="0.6"/><rect x="3" y="1" width="1" height="5" fill="#39b5c4"/></svg>
<div class="a" style="left:243px;top:69px;width:1px;height:7px;background:#666;"></div>
<svg class="a" style="left:247px;top:69px;" width="7" height="7" viewBox="0 0 7 7"><circle cx="3" cy="3.5" r="2.5" fill="none" stroke="#ccc" stroke-width="0.6"/></svg>
<div class="a" style="left:253px;top:68.5px;width:8.5px;height:8px;background:#4b80aa;"></div>
<svg class="a" style="left:254px;top:69px;" width="7" height="7" viewBox="0 0 7 7"><path d="M3.5 0.5L6.5 2V5.5L3.5 7L0.5 5.5V2Z" fill="#39b5c4"/></svg>
<svg class="a" style="left:263px;top:69px;" width="7" height="7" viewBox="0 0 7 7"><circle cx="3" cy="3.5" r="2.6" fill="#ddd"/><path d="M3 0.9A2.6 2.6 0 0 0 3 6.1Z" fill="#666"/></svg>
<svg class="a" style="left:271px;top:69px;" width="7" height="7" viewBox="0 0 7 7"><circle cx="3.5" cy="3.5" r="2.7" fill="none" stroke="#8cc" stroke-width="0.9"/></svg>
<div class="a" style="left:277px;top:68.5px;width:8px;height:8px;background:#4b80aa;"></div>
<svg class="a" style="left:278px;top:69px;" width="7" height="7" viewBox="0 0 7 7"><circle cx="3" cy="3.5" r="2.6" fill="#888" stroke="#aaa" stroke-width="0.5"/></svg>
<svg class="a" style="left:286px;top:69px;" width="7" height="7" viewBox="0 0 7 7"><path d="M3 0.5V4M1 2L5 2M2 4H4V6H2Z" fill="#ddd" stroke="#ddd" stroke-width="0.5"/></svg>
<svg class="a" style="left:292px;top:69px;" width="7" height="7" viewBox="0 0 7 7"><path d="M0.5 5Q3 2 6 4" stroke="#ccc" stroke-width="0.6" fill="none"/><circle cx="4.5" cy="3.5" r="1.5" fill="#39b5c4"/></svg>
<div class="a" style="left:301px;top:69px;width:1px;height:7px;background:#666;"></div>
<svg class="a" style="left:306px;top:69px;" width="7" height="7" viewBox="0 0 7 7"><circle cx="3" cy="3" r="2.5" fill="#ddd"/><rect x="1.5" y="5" width="3" height="1.5" fill="#39b5c4"/></svg>
<svg class="a" style="left:313px;top:69px;" width="7" height="7" viewBox="0 0 7 7"><path d="M1 6L5 2" stroke="#bbb" stroke-width="1.3"/><circle cx="5" cy="2" r="1.5" fill="#ccc"/></svg>
<svg class="a" style="left:320px;top:69px;" width="7" height="7" viewBox="0 0 7 7"><circle cx="3" cy="3.5" r="2.5" fill="none" stroke="#39b5c4" stroke-width="0.9"/></svg>
<svg class="a" style="left:327px;top:69px;" width="7" height="7" viewBox="0 0 7 7"><rect x="0.5" y="1" width="6" height="5" fill="#3d4b4b"/></svg>
<div class="a" style="left:335px;top:69px;width:1px;height:7px;background:#666;"></div>
<svg class="a" style="left:338px;top:69px;" width="7" height="7" viewBox="0 0 7 7"><path d="M0.5 0.5H3V3" stroke="#39b5c4" stroke-width="0.6" fill="none"/><path d="M3 3L6 6L4 6.5Z" fill="#ddd"/></svg>
<div class="a" style="left:347px;top:69px;width:1px;height:7px;background:#666;"></div>
<svg class="a" style="left:350px;top:69px;" width="7" height="7" viewBox="0 0 7 7"><path d="M0.5 3H4V6H0.5ZM2.5 1H6V4" fill="#ddd" stroke="#ddd" stroke-width="0.5"/></svg>
<svg class="a" style="left:357px;top:69px;" width="7" height="7" viewBox="0 0 7 7"><rect x="0.5" y="2.5" width="4" height="4" fill="#ddd"/><rect x="2.5" y="0.5" width="4" height="4" fill="#aaa"/></svg>
<svg class="a" style="left:364px;top:69px;" width="7" height="7" viewBox="0 0 7 7"><rect x="0.5" y="0.5" width="6" height="6" fill="none" stroke="#ccc" stroke-width="0.6"/><path d="M1.5 1.5L5.5 5.5" stroke="#ccc" stroke-width="0.8"/></svg>
<div class="a" style="left:375px;top:69px;width:1px;height:7px;background:#666;"></div>
<svg class="a" style="left:379px;top:69px;" width="7" height="7" viewBox="0 0 7 7"><circle cx="3" cy="3.5" r="2.3" fill="none" stroke="#ddd" stroke-width="1" stroke-dasharray="1 0.6"/></svg>
<div class="a" style="left:386px;top:69px;width:15px;height:7px;background:#2e2e2e;"></div>
<span class="t" style="left:386.50px;top:70.50px;font-size:5.6px;color:#999;transform:scaleX(0.8142857142857144);transform-origin:1.5px 0;">0.00</span>
<svg class="a" style="left:404px;top:69px;" width="6" height="7" viewBox="0 0 6 7"><path d="M1 1.5L5 1.5V6L1 6ZM3 1.5V6" fill="#ddd"/></svg>
<div class="a" style="left:410px;top:69px;width:15px;height:7px;background:#2e2e2e;"></div>
<span class="t" style="left:410.50px;top:70.50px;font-size:5.6px;color:#bbb;transform:scaleX(0.8142857142857144);transform-origin:1.5px 0;">1.00</span>
<div class="a" style="left:427px;top:68.5px;width:7px;height:8px;background:#4b80aa;"></div>
<svg class="a" style="left:427.5px;top:69px;" width="7" height="7" viewBox="0 0 7 7"><circle cx="3" cy="3.5" r="2.5" fill="#39b5c4"/><rect x="1" y="3" width="4" height="1" fill="#333"/></svg>
<div class="a" style="left:435px;top:68.5px;width:80px;height:8px;background:#535353;"></div>
<span class="t" style="left:435.50px;top:70.60px;font-size:5.6px;color:#c8c8c8;transform:scaleX(0.7285714285714286);transform-origin:1.5px 0;">ACES 1.0 SDR-video (sRGB)</span>
<div class="a" style="left:508px;top:68.5px;width:7px;height:8px;background:#5a5a5a;"></div>
<svg class="a" style="left:510px;top:71px;" width="4" height="3" viewBox="0 0 4 3"><path d="M0 0H3.6L1.8 2.2Z" fill="#ddd"/></svg>
<svg class="a" style="left:126px;top:76px" width="705" height="439" viewBox="126 76 705 439"><rect x="126" y="76" width="705" height="440" fill="#8d8d8d"/><polygon points="795.8,76 831,76 831,226 815,226 822.5,165" fill="#808080"/><polygon points="126,223 404,223 409,219.5 831,219.8 831,516 126,516" fill="#606060"/><line x1="445" y1="166" x2="820" y2="166.5" stroke="#8a8a8a" stroke-width="0.4"/><line x1="445" y1="166" x2="470" y2="166" stroke="#7a7a7a" stroke-width="0.6"/><line x1="553" y1="166" x2="575" y2="166" stroke="#7a7a7a" stroke-width="0.6"/><line x1="635" y1="166" x2="660" y2="166" stroke="#7a7a7a" stroke-width="0.6"/><line x1="707" y1="166" x2="730" y2="166" stroke="#7a7a7a" stroke-width="0.6"/><line x1="760" y1="166" x2="800" y2="166" stroke="#7a7a7a" stroke-width="0.6"/><line x1="445" y1="177" x2="820" y2="177.5" stroke="#8a8a8a" stroke-width="0.4"/><line x1="455" y1="177" x2="480" y2="177" stroke="#7a7a7a" stroke-width="0.6"/><line x1="521" y1="177" x2="545" y2="177" stroke="#7a7a7a" stroke-width="0.6"/><line x1="590" y1="177" x2="620" y2="177" stroke="#7a7a7a" stroke-width="0.6"/><line x1="721" y1="177" x2="745" y2="177" stroke="#7a7a7a" stroke-width="0.6"/><line x1="790" y1="177" x2="815" y2="177" stroke="#7a7a7a" stroke-width="0.6"/><line x1="445" y1="188" x2="820" y2="188.5" stroke="#8a8a8a" stroke-width="0.4"/><line x1="445" y1="188" x2="470" y2="188" stroke="#7a7a7a" stroke-width="0.6"/><line x1="560" y1="188" x2="590" y2="188" stroke="#7a7a7a" stroke-width="0.6"/><line x1="678" y1="188" x2="700" y2="188" stroke="#7a7a7a" stroke-width="0.6"/><line x1="740" y1="188" x2="770" y2="188" stroke="#7a7a7a" stroke-width="0.6"/><line x1="445" y1="199" x2="820" y2="199.5" stroke="#8a8a8a" stroke-width="0.4"/><line x1="450" y1="199" x2="475" y2="199" stroke="#7a7a7a" stroke-width="0.6"/><line x1="545" y1="199" x2="575" y2="199" stroke="#7a7a7a" stroke-width="0.6"/><line x1="654" y1="199" x2="677" y2="199" stroke="#7a7a7a" stroke-width="0.6"/><line x1="720" y1="199" x2="745" y2="199" stroke="#7a7a7a" stroke-width="0.6"/><line x1="780" y1="199" x2="810" y2="199" stroke="#7a7a7a" stroke-width="0.6"/><polygon points="410.5,156 417,156 417,220 410.5,220" fill="#7b7b7b"/><polygon points="417,161.9 435,163.9 435,166.4 417,164.4" fill="#7b7b7b"/><polygon points="417,172.5 435,174.5 435,177 417,175" fill="#7b7b7b"/><polygon points="417,183.0 435,185.0 435,187.5 417,185.5" fill="#7b7b7b"/><polygon points="417,194.5 435,196.5 435,199 417,197" fill="#7b7b7b"/><polygon points="435,159 446,159 446,224 435,224" fill="#7a7a7a"/><polygon points="440,159 446,159 446,224 440,224" fill="#828282"/><polygon points="824,159 831,159 831,226 815,226" fill="#777777"/><line x1="822" y1="167.4" x2="829" y2="167.4" stroke="#8e8e8e" stroke-width="0.6"/><line x1="822" y1="177.7" x2="829" y2="177.7" stroke="#8e8e8e" stroke-width="0.6"/><line x1="822" y1="189" x2="829" y2="189" stroke="#8e8e8e" stroke-width="0.6"/><line x1="822" y1="199.7" x2="829" y2="199.7" stroke="#8e8e8e" stroke-width="0.6"/><circle cx="829" cy="189.5" r="0.7" fill="#222"/><circle cx="828" cy="201" r="0.9" fill="#222"/><polygon points="268.4,395.2 831,401.5 831,454.8 273,448.2" fill="#8b8b8b"/><line x1="440.5" y1="76" x2="441" y2="267" stroke="#c93a3d" stroke-width="0.8"/><line x1="693.7" y1="76" x2="681.3" y2="230" stroke="#c93a3d" stroke-width="0.8"/><line x1="681.3" y1="230" x2="677.8" y2="268" stroke="#c93a3d" stroke-width="0.8"/><line x1="675.3" y1="165.8" x2="681.3" y2="230" stroke="#c93a3d" stroke-width="0.8"/><line x1="697.5" y1="165.8" x2="681.3" y2="230" stroke="#c93a3d" stroke-width="0.8"/><line x1="126" y1="204.3" x2="818" y2="209.8" stroke="#c93a3d" stroke-width="0.8"/><line x1="126" y1="211.6" x2="831" y2="332.5" stroke="#c93a3d" stroke-width="0.8"/><line x1="126" y1="309" x2="815" y2="216" stroke="#c93a3d" stroke-width="0.8"/><line x1="443" y1="224" x2="831" y2="298" stroke="#c93a3d" stroke-width="0.8"/><line x1="443" y1="224" x2="815" y2="225.5" stroke="#c93a3d" stroke-width="0.8"/><line x1="815" y1="225.5" x2="831" y2="231" stroke="#c93a3d" stroke-width="0.8"/><line x1="443" y1="224" x2="398" y2="325" stroke="#c93a3d" stroke-width="0.8"/><line x1="396" y1="353" x2="815" y2="225.5" stroke="#c93a3d" stroke-width="0.8"/><line x1="396" y1="358.6" x2="831" y2="362.3" stroke="#c93a3d" stroke-width="0.8"/><polygon points="126,174 315.5,174.3 301,178.4 126,177.6" fill="none" stroke="#c93a3d" stroke-width="0.8"/><line x1="126" y1="175.8" x2="306" y2="176" stroke="#c93a3d" stroke-width="0.6"/><path d="M258.5 196.5Q268 198.5 281.5 217Q266 213 258.5 196.5Z" fill="none" stroke="#c93a3d" stroke-width="0.7"/><path d="M259 197Q268 203 281 216.5" fill="none" stroke="#c93a3d" stroke-width="0.5"/><line x1="261.5" y1="215" x2="269" y2="208" stroke="#c93a3d" stroke-width="0.6"/><polygon points="197.2,234.2 203.4,230.8 204,254 198.6,259.6" fill="none" stroke="#c93a3d" stroke-width="0.7"/><path d="M197.5 234L204 254M203.4 231L198.6 259.5" fill="none" stroke="#c93a3d" stroke-width="0.5"/><line x1="188" y1="245" x2="199" y2="245" stroke="#c93a3d" stroke-width="0.6"/><line x1="440" y1="166" x2="394" y2="235" stroke="#2a2a2a" stroke-width="0.6"/><line x1="440" y1="178" x2="395" y2="255" stroke="#2a2a2a" stroke-width="0.6"/><line x1="440" y1="189" x2="396" y2="277" stroke="#2a2a2a" stroke-width="0.6"/><line x1="440" y1="199" x2="397" y2="298" stroke="#2a2a2a" stroke-width="0.6"/><line x1="395" y1="249.6" x2="831" y2="251.5" stroke="#a2a2a2" stroke-width="1.3"/><line x1="395" y1="271.6" x2="831" y2="274" stroke="#a2a2a2" stroke-width="1.3"/><line x1="395" y1="295.6" x2="831" y2="298" stroke="#a2a2a2" stroke-width="1.3"/><line x1="395" y1="318.6" x2="831" y2="321" stroke="#a2a2a2" stroke-width="1.3"/><polygon points="268.6,251.8 286,250.6 296,389 288,393.5 280,389" fill="#717171"/><polygon points="277.5,251.3 286,250.6 296,389 288,393.5" fill="#787878"/><polygon points="286,267.5 372,246.5 372,252 286,273" fill="#727272"/><polygon points="286,267.5 372,246.5 372,249 286,270" fill="#7a7a7a"/><polygon points="286,292.0 372,269.5 372,275 286,297.5" fill="#727272"/><polygon points="286,292.0 372,269.5 372,272 286,294.5" fill="#7a7a7a"/><polygon points="286,316.5 372,293.0 372,298.5 286,322" fill="#727272"/><polygon points="286,316.5 372,293.0 372,295.5 286,319" fill="#7a7a7a"/><polygon points="286,341.1 372,316.5 372,322 286,346.6" fill="#727272"/><polygon points="286,341.1 372,316.5 372,319 286,343.6" fill="#7a7a7a"/><polygon points="371,232.5 393,231.5 398,356 387,360.5 376,356" fill="#717171"/><polygon points="385,232 393,231.5 398,356 387,360.5" fill="#787878"/><g fill="none" stroke="#1a6428" stroke-width="0.55"><circle cx="221" cy="226.5" r="6.8"/><circle cx="221" cy="226.5" r="4.42"/><line x1="225.42" y1="226.50" x2="227.80" y2="226.50"/><line x1="224.58" y1="229.10" x2="226.50" y2="230.50"/><line x1="222.37" y1="230.70" x2="223.10" y2="232.97"/><line x1="219.63" y1="230.70" x2="218.90" y2="232.97"/><line x1="217.42" y1="229.10" x2="215.50" y2="230.50"/><line x1="216.58" y1="226.50" x2="214.20" y2="226.50"/><line x1="217.42" y1="223.90" x2="215.50" y2="222.50"/><line x1="219.63" y1="222.30" x2="218.90" y2="220.03"/><line x1="222.37" y1="222.30" x2="223.10" y2="220.03"/><line x1="224.58" y1="223.90" x2="226.50" y2="222.50"/><circle cx="215.5" cy="230" r="4.5"/><circle cx="215.5" cy="230" r="2.9250000000000003"/><line x1="218.43" y1="230.00" x2="220.00" y2="230.00"/><line x1="217.87" y1="231.72" x2="219.14" y2="232.65"/><line x1="216.40" y1="232.78" x2="216.89" y2="234.28"/><line x1="214.60" y1="232.78" x2="214.11" y2="234.28"/><line x1="213.13" y1="231.72" x2="211.86" y2="232.65"/><line x1="212.57" y1="230.00" x2="211.00" y2="230.00"/><line x1="213.13" y1="228.28" x2="211.86" y2="227.35"/><line x1="214.60" y1="227.22" x2="214.11" y2="225.72"/><line x1="216.40" y1="227.22" x2="216.89" y2="225.72"/><line x1="217.87" y1="228.28" x2="219.14" y2="227.35"/><path d="M215 228.5L228.5 228L229 237.6L215.5 237.8Z"/><path d="M218.5 228.5V237.7M222 228.3V237.7M225 228.2V237.6M215.2 233H228.8"/><path d="M228.5 229.5L234 229.8L233.6 236.8L228.8 236.5Z"/><path d="M231 229.6V236.6"/><circle cx="195" cy="270" r="6.5"/><circle cx="195" cy="270" r="4.2250000000000005"/><line x1="199.22" y1="270.00" x2="201.50" y2="270.00"/><line x1="198.42" y1="272.48" x2="200.26" y2="273.82"/><line x1="196.31" y1="274.02" x2="197.01" y2="276.18"/><line x1="193.69" y1="274.02" x2="192.99" y2="276.18"/><line x1="191.58" y1="272.48" x2="189.74" y2="273.82"/><line x1="190.78" y1="270.00" x2="188.50" y2="270.00"/><line x1="191.58" y1="267.52" x2="189.74" y2="266.18"/><line x1="193.69" y1="265.98" x2="192.99" y2="263.82"/><line x1="196.31" y1="265.98" x2="197.01" y2="263.82"/><line x1="198.42" y1="267.52" x2="200.26" y2="266.18"/><circle cx="188.8" cy="277.5" r="5.5"/><circle cx="188.8" cy="277.5" r="3.575"/><line x1="192.38" y1="277.50" x2="194.30" y2="277.50"/><line x1="191.69" y1="279.60" x2="193.25" y2="280.73"/><line x1="189.90" y1="280.90" x2="190.50" y2="282.73"/><line x1="187.70" y1="280.90" x2="187.10" y2="282.73"/><line x1="185.91" y1="279.60" x2="184.35" y2="280.73"/><line x1="185.23" y1="277.50" x2="183.30" y2="277.50"/><line x1="185.91" y1="275.40" x2="184.35" y2="274.27"/><line x1="187.70" y1="274.10" x2="187.10" y2="272.27"/><line x1="189.90" y1="274.10" x2="190.50" y2="272.27"/><line x1="191.69" y1="275.40" x2="193.25" y2="274.27"/><path d="M191 272L205.5 271.5L207.5 286.5L192 287Z"/><path d="M195 272V287M199 271.8V286.8M203 271.7V286.6M191.5 279.5H206.5"/><path d="M205.5 273L211.6 272.6L211.4 279.5L206 280Z"/><path d="M208.5 272.8V279.7"/></g><g transform="translate(592.5,197.3) scale(1.0,1.0)" fill="none" stroke="#1a6428" stroke-width="0.95"><path d="M7 19Q0 15 3 10Q6 6 11 8Q13 1 19 1Q25 2 25 10"/><path d="M9 17Q4 13 6 10.5Q9 8.5 12 10Q15 4 19 4Q23 5 23 11"/><path d="M11 10L26 13L23 23L8 20Z"/><path d="M14.5 11L11.5 21M18 11.5L15 21.5"/><path d="M25 15.5L33 18L31 24.5L23 22"/><path d="M27.5 16.5L25.5 23M30 17.3L28 23.8"/></g><g transform="translate(697,191.3) scale(0.7352941176470589,0.8076923076923077)" fill="none" stroke="#1a6428" stroke-width="1.2919999999999998"><path d="M7 19Q0 15 3 10Q6 6 11 8Q13 1 19 1Q25 2 25 10"/><path d="M9 17Q4 13 6 10.5Q9 8.5 12 10Q15 4 19 4Q23 5 23 11"/><path d="M11 10L26 13L23 23L8 20Z"/><path d="M14.5 11L11.5 21M18 11.5L15 21.5"/><path d="M25 15.5L33 18L31 24.5L23 22"/><path d="M27.5 16.5L25.5 23M30 17.3L28 23.8"/></g><circle cx="587.4" cy="127.6" r="0.9" fill="#3a3ae0"/><circle cx="539.4" cy="176.8" r="0.9" fill="#3a3ae0"/><circle cx="506.6" cy="273" r="0.9" fill="#3a3ae0"/><g fill="#d6d6d6"><path d="M617.5 299Q617.5 294 620 294.5L623 299.5L645 297.5L654 283.5Q657 281 660 284L671 296.5L697 298Q703 299.5 706 301A5.6 5.6 0 1 1 706.5 311.5Q700 313.5 694 314.5L672 316.5Q665 317 663.5 314L650 305.5L623 304.5Q618 305.5 617.5 303Z"/></g><path d="M650.8 297.3L657 288.5L664.5 297.3Z" fill="#606060"/><path d="M650 305.5Q668 309 694 314.5" stroke="#bdbdbd" stroke-width="1.2" fill="none"/><circle cx="711" cy="306" r="3" fill="#e4e4e4"/><path d="M664 298L663 312M690 299L689 314M709 301L706 312M670 312L672 316M656 285L660 287" stroke="#c93a3d" stroke-width="0.6" fill="none"/><path d="M666 302L664 309M620 298L624 301M645 294.5L649 296.5" stroke="#3030d0" stroke-width="1" fill="none"/><path d="M636 299L644 297.5" stroke="#c8b440" stroke-width="0.8"/><path d="M136.5 503V495" stroke="#3c3" stroke-width="0.8"/><path d="M136.5 503H142" stroke="#44e" stroke-width="0.8"/><path d="M136.5 503V499" stroke="#d33" stroke-width="0.6"/></svg>
<span class="t" style="left:464.50px;top:506.40px;font-size:5.8px;color:#e8e8e8;transform:scaleX(0.8);transform-origin:1.5px 0;">persp12</span>
<div class="a" style="left:831px;top:59px;width:2px;height:456px;background:#3a3a3a;"></div>
<div class="a" style="left:833px;top:59px;width:184px;height:456px;background:#444444;"></div>
<span class="t" style="left:835.30px;top:62.50px;font-size:5.6px;color:#c0c0c0;transform:scaleX(0.8142857142857144);transform-origin:1.5px 0;">List</span>
<span class="t" style="left:848.10px;top:62.50px;font-size:5.6px;color:#c0c0c0;transform:scaleX(0.8142857142857144);transform-origin:1.5px 0;">Selected</span>
<span class="t" style="left:871.30px;top:62.50px;font-size:5.6px;color:#c0c0c0;transform:scaleX(0.8142857142857144);transform-origin:1.5px 0;">Focus</span>
<span class="t" style="left:889.10px;top:62.50px;font-size:5.6px;color:#c0c0c0;transform:scaleX(0.8142857142857144);transform-origin:1.5px 0;">Attributes</span>
<span class="t" style="left:915.30px;top:62.50px;font-size:5.6px;color:#c0c0c0;transform:scaleX(0.8142857142857144);transform-origin:1.5px 0;">Display</span>
<span class="t" style="left:936.80px;top:62.50px;font-size:5.6px;color:#c0c0c0;transform:scaleX(0.8142857142857144);transform-origin:1.5px 0;">Show</span>
<span class="t" style="left:954.20px;top:62.50px;font-size:5.6px;color:#c0c0c0;transform:scaleX(0.8142857142857144);transform-origin:1.5px 0;">Help</span>
<div class="a" style="left:836px;top:75px;width:69px;height:7px;background:#353535;"></div>
<span class="t" style="left:838.50px;top:76.50px;font-size:5.6px;color:#d0d0d0;transform:scaleX(0.8410714285714286);transform-origin:1.5px 0;">left_wall:aiPhotometricLight6</span>
<span class="t" style="left:908.50px;top:76.50px;font-size:5.6px;color:#d0d0d0;transform:scaleX(0.8410714285714286);transform-origin:1.5px 0;">left_wall:aiPhotometricLightShape6</span>
<div class="a" style="left:987px;top:75px;width:16px;height:7px;background:#353535;"></div>
<span class="t" style="left:987.50px;top:76.50px;font-size:5.6px;color:#777;transform:scaleX(0.8571428571428573);transform-origin:1.5px 0;">defa</span>
<svg class="a" style="left:1004px;top:76px;" width="4" height="5" viewBox="0 0 4 5"><path d="M3 0.5L0.8 2.5L3 4.5Z" fill="#888"/></svg>
<svg class="a" style="left:1009px;top:76px;" width="4" height="5" viewBox="0 0 4 5"><path d="M0.8 0.5L3 2.5L0.8 4.5Z" fill="#ddd"/></svg>
<span class="t" style="right:129.20px;top:96.30px;font-size:5.6px;color:#c4c4c4;transform:scaleX(0.8142857142857144);transform-origin:calc(100% - 1.5px) 0;">aiPhotometricLight:</span>
<div class="a" style="left:896.8px;top:94.8px;width:61px;height:7px;background:#2b2b2b;"></div>
<div class="a" style="left:897px;top:94.8px;width:61px;height:7px;overflow:hidden">
<span class="t" style="left:-0.50px;top:1.50px;font-size:5.6px;color:#e0e0e0;transform:scaleX(0.7821428571428571);transform-origin:1.5px 0;">all:aiPhotometricLightShape6</span>
</div>
<svg class="a" style="left:964px;top:91px;" width="8" height="6" viewBox="0 0 8 6"><rect x="0.5" y="0.5" width="6" height="4.5" fill="none" stroke="#ccc" stroke-width="0.6"/><path d="M0 2.7H3" stroke="#eee" stroke-width="0.9"/></svg>
<svg class="a" style="left:964px;top:99px;" width="8" height="7" viewBox="0 0 8 7"><rect x="0.5" y="0.5" width="5" height="5.5" fill="none" stroke="#ccc" stroke-width="0.6"/><path d="M4 3.2H7.5" stroke="#eee" stroke-width="0.9"/></svg>
<div class="a" style="left:975px;top:86px;width:28px;height:8px;background:#575757;"></div>
<span class="t" style="left:989px;top:88.00px;font-size:5.6px;color:#d8d8d8;transform:translateX(-50%) scaleX(0.8142857142857144);transform-origin:50% 0;">Focus</span>
<div class="a" style="left:975px;top:95px;width:28px;height:7.5px;background:#575757;"></div>
<span class="t" style="left:989px;top:96.80px;font-size:5.6px;color:#d8d8d8;transform:translateX(-50%) scaleX(0.8142857142857144);transform-origin:50% 0;">Presets</span>
<div class="a" style="left:975px;top:103.8px;width:13.5px;height:7.5px;background:#575757;"></div>
<span class="t" style="left:981.7px;top:105.60px;font-size:5.6px;color:#d8d8d8;transform:translateX(-50%) scaleX(0.8142857142857144);transform-origin:50% 0;">Show</span>
<div class="a" style="left:989.5px;top:103.8px;width:13.5px;height:7.5px;background:#575757;"></div>
<span class="t" style="left:996.2px;top:105.60px;font-size:5.6px;color:#d8d8d8;transform:translateX(-50%) scaleX(0.8142857142857144);transform-origin:50% 0;">Hide</span>
<div class="a" style="left:897.2px;top:119.7px;width:25.5px;height:25.3px;background:#050505;"></div>
<svg class="a" style="left:897.2px;top:119.7px;" width="26" height="25" viewBox="0 0 26 25"><path d="M5.5 21L11 6H15L20.5 21H16L13 12.5L10 21Z" fill="#17aab0"/><path d="M11 6H15L17 11.5L12.5 9Z" fill="#8fe0e3"/></svg>
<div class="a" style="left:838px;top:157px;width:170px;height:148px;background:#4a4a4a;"></div>
<div class="a" style="left:838px;top:150px;width:170px;height:7.2px;background:#585858;"></div>
<svg class="a" style="left:840.5px;top:152px;" width="5" height="4" viewBox="0 0 5 4"><path d="M0 0.3H4.6L2.3 3Z" fill="#e8e8e8"/></svg>
<span class="t" style="left:849.50px;top:151.60px;font-size:5.6px;color:#e0e0e0;font-weight:bold;transform:scaleX(0.7714285714285716);transform-origin:1.5px 0;">Photometric Light Attributes</span>
<div class="a" style="left:1008.5px;top:148px;width:5px;height:286px;background:#3a3a3a;"></div>
<div class="a" style="left:1009.2px;top:155px;width:3.6px;height:209px;background:#555;border-radius:1.5px"></div>
<svg class="a" style="left:1008.5px;top:149px;" width="5" height="4" viewBox="0 0 5 4"><path d="M0.5 3L2.5 0.8L4.5 3Z" fill="#ccc"/></svg>
<svg class="a" style="left:1008.5px;top:429px;" width="5" height="4" viewBox="0 0 5 4"><path d="M0.5 0.8L2.5 3L4.5 0.8Z" fill="#ccc"/></svg>
<span class="t" style="right:127.50px;top:162.30px;font-size:5.6px;color:#c4c4c4;transform:scaleX(0.8142857142857144);transform-origin:calc(100% - 1.5px) 0;">Photometry File</span>
<div class="a" style="left:898px;top:161px;width:95.5px;height:6.8px;background:#2b2b2b;"></div>
<div class="a" style="left:898px;top:161px;width:95px;height:7px;overflow:hidden">
<span class="t" style="left:0.00px;top:1.40px;font-size:5.6px;color:#dddddd;transform:scaleX(0.7714285714285716);transform-origin:1.5px 0;">tion Files/P7 Zenith/IES FILES/texture light.ies</span>
</div>
<svg class="a" style="left:997px;top:161px;" width="8" height="7" viewBox="0 0 8 7"><path d="M0.5 1H3L3.7 1.8H7.2V6.5H0.5Z" fill="#cfcfcf"/></svg>
<span class="t" style="right:127.50px;top:171.90px;font-size:5.6px;color:#c4c4c4;transform:scaleX(0.8142857142857144);transform-origin:calc(100% - 1.5px) 0;">Color</span>
<div class="a" style="left:899px;top:171.1px;width:27px;height:5.6px;background:#0000e0;"></div>
<div class="a" style="left:927px;top:173.4px;width:65px;height:1px;background:#2e2e2e;"></div>
<div class="a" style="left:990.0px;top:171.6px;width:3px;height:4.6px;background:#b8b8b8;border-radius:0.5px"></div>
<svg class="a" style="left:996px;top:170.9px;" width="6" height="6" viewBox="0 0 6 6"><rect x="0" y="0" width="6" height="6" fill="#eee"/><rect x="0.5" y="0.5" width="2.5" height="2.5" fill="#111"/><rect x="3" y="3" width="2.5" height="2.5" fill="#111"/><rect x="3.5" y="0.8" width="1.6" height="1.6" fill="#111"/><rect x="0.8" y="3.5" width="1.6" height="1.6" fill="#111"/></svg>
<span class="t" style="right:127.50px;top:180.80px;font-size:5.6px;color:#c4c4c4;transform:scaleX(0.8142857142857144);transform-origin:calc(100% - 1.5px) 0;">Intensity</span>
<div class="a" style="left:899px;top:179.8px;width:27.5px;height:6px;background:#2b2b2b;"></div>
<span class="t" style="left:899.50px;top:181.10px;font-size:5.6px;color:#d0d0d0;transform:scaleX(0.8142857142857144);transform-origin:1.5px 0;">300.000</span>
<div class="a" style="left:927px;top:182.3px;width:65px;height:1px;background:#2e2e2e;"></div>
<div class="a" style="left:959.0px;top:180.5px;width:3px;height:4.6px;background:#b8b8b8;border-radius:0.5px"></div>
<svg class="a" style="left:996px;top:179.8px;" width="6" height="6" viewBox="0 0 6 6"><rect x="0" y="0" width="6" height="6" fill="#eee"/><rect x="0.5" y="0.5" width="2.5" height="2.5" fill="#111"/><rect x="3" y="3" width="2.5" height="2.5" fill="#111"/><rect x="3.5" y="0.8" width="1.6" height="1.6" fill="#111"/><rect x="0.8" y="3.5" width="1.6" height="1.6" fill="#111"/></svg>
<div class="a" style="left:838px;top:187.2px;width:170px;height:0.6px;background:#4e4e4e;"></div>
<div class="a" style="left:896px;top:189.5px;width:5.5px;height:5px;background:#2b2b2b;"></div>
<span class="t" style="left:902.50px;top:190.00px;font-size:5.6px;color:#c4c4c4;transform:scaleX(0.8142857142857144);transform-origin:1.5px 0;">Use Color Temperature</span>
<div class="a" style="left:839.3px;top:198.5px;width:26.4px;height:4.6px;background:#dcdcdc;"></div>
<span class="t" style="right:126.50px;top:198.80px;font-size:5.6px;color:#6e6e6e;transform:scaleX(0.8142857142857144);transform-origin:calc(100% - 1.5px) 0;">Temperature</span>
<div class="a" style="left:899px;top:197.8px;width:27.5px;height:6px;background:#333;"></div>
<span class="t" style="left:899.50px;top:199.10px;font-size:5.6px;color:#666;transform:scaleX(0.8142857142857144);transform-origin:1.5px 0;">6500</span>
<div class="a" style="left:927px;top:200.3px;width:65px;height:1px;background:#3e3e3e;"></div>
<div class="a" style="left:954.0px;top:198.5px;width:3px;height:4.6px;background:#6a6a6a;border-radius:0.5px"></div>
<svg class="a" style="left:996px;top:197.8px;" width="6" height="6" viewBox="0 0 6 6"><rect x="0" y="0" width="6" height="6" fill="#777"/><rect x="0.5" y="0.5" width="2.5" height="2.5" fill="#555"/><rect x="3" y="3" width="2.5" height="2.5" fill="#555"/><rect x="3.5" y="0.8" width="1.6" height="1.6" fill="#555"/><rect x="0.8" y="3.5" width="1.6" height="1.6" fill="#555"/></svg>
<div class="a" style="left:838px;top:205.4px;width:170px;height:0.6px;background:#4e4e4e;"></div>
<div class="a" style="left:898px;top:208.5px;width:5.5px;height:5px;background:#2b2b2b;"></div>
<svg class="a" style="left:898px;top:208.5px;" width="6" height="5" viewBox="0 0 6 5"><path d="M1 2.5L2.5 4L5 0.8" stroke="#e0e0e0" stroke-width="0.9" fill="none"/></svg>
<span class="t" style="left:904.50px;top:209.00px;font-size:5.6px;color:#c4c4c4;transform:scaleX(0.8142857142857144);transform-origin:1.5px 0;">Illuminates By Default</span>
<span class="t" style="right:127.50px;top:218.80px;font-size:5.6px;color:#c4c4c4;transform:scaleX(0.8142857142857144);transform-origin:calc(100% - 1.5px) 0;">Exposure</span>
<div class="a" style="left:899px;top:217.8px;width:27.5px;height:6px;background:#2b2b2b;"></div>
<span class="t" style="left:899.50px;top:219.10px;font-size:5.6px;color:#d0d0d0;transform:scaleX(0.8142857142857144);transform-origin:1.5px 0;">0.000</span>
<div class="a" style="left:927px;top:220.3px;width:65px;height:1px;background:#2e2e2e;"></div>
<div class="a" style="left:959.0px;top:218.5px;width:3px;height:4.6px;background:#b8b8b8;border-radius:0.5px"></div>
<svg class="a" style="left:996px;top:217.8px;" width="6" height="6" viewBox="0 0 6 6"><rect x="0" y="0" width="6" height="6" fill="#eee"/><rect x="0.5" y="0.5" width="2.5" height="2.5" fill="#111"/><rect x="3" y="3" width="2.5" height="2.5" fill="#111"/><rect x="3.5" y="0.8" width="1.6" height="1.6" fill="#111"/><rect x="0.8" y="3.5" width="1.6" height="1.6" fill="#111"/></svg>
<span class="t" style="right:127.50px;top:228.20px;font-size:5.6px;color:#c4c4c4;transform:scaleX(0.8142857142857144);transform-origin:calc(100% - 1.5px) 0;">Samples</span>
<div class="a" style="left:899px;top:227.2px;width:27.5px;height:6px;background:#2b2b2b;"></div>
<span class="t" style="left:899.50px;top:228.50px;font-size:5.6px;color:#d0d0d0;transform:scaleX(0.8142857142857144);transform-origin:1.5px 0;">1</span>
<div class="a" style="left:927px;top:229.7px;width:65px;height:1px;background:#2e2e2e;"></div>
<div class="a" style="left:934.1px;top:227.89999999999998px;width:3px;height:4.6px;background:#b8b8b8;border-radius:0.5px"></div>
<svg class="a" style="left:996px;top:227.2px;" width="6" height="6" viewBox="0 0 6 6"><rect x="0" y="0" width="6" height="6" fill="#eee"/><rect x="0.5" y="0.5" width="2.5" height="2.5" fill="#111"/><rect x="3" y="3" width="2.5" height="2.5" fill="#111"/><rect x="3.5" y="0.8" width="1.6" height="1.6" fill="#111"/><rect x="0.8" y="3.5" width="1.6" height="1.6" fill="#111"/></svg>
<span class="t" style="right:127.50px;top:237.80px;font-size:5.6px;color:#c4c4c4;transform:scaleX(0.8142857142857144);transform-origin:calc(100% - 1.5px) 0;">Radius</span>
<div class="a" style="left:899px;top:236.8px;width:27.5px;height:6px;background:#2b2b2b;"></div>
<span class="t" style="left:899.50px;top:238.10px;font-size:5.6px;color:#d0d0d0;transform:scaleX(0.8142857142857144);transform-origin:1.5px 0;">0.000</span>
<div class="a" style="left:927px;top:239.3px;width:65px;height:1px;background:#2e2e2e;"></div>
<div class="a" style="left:927.8px;top:237.5px;width:3px;height:4.6px;background:#b8b8b8;border-radius:0.5px"></div>
<svg class="a" style="left:996px;top:236.8px;" width="6" height="6" viewBox="0 0 6 6"><rect x="0" y="0" width="6" height="6" fill="#eee"/><rect x="0.5" y="0.5" width="2.5" height="2.5" fill="#111"/><rect x="3" y="3" width="2.5" height="2.5" fill="#111"/><rect x="3.5" y="0.8" width="1.6" height="1.6" fill="#111"/><rect x="0.8" y="3.5" width="1.6" height="1.6" fill="#111"/></svg>
<div class="a" style="left:899.5px;top:246.5px;width:5.5px;height:5px;background:#2b2b2b;"></div>
<svg class="a" style="left:899.5px;top:246.5px;" width="6" height="5" viewBox="0 0 6 5"><path d="M1 2.5L2.5 4L5 0.8" stroke="#e0e0e0" stroke-width="0.9" fill="none"/></svg>
<span class="t" style="left:906.00px;top:247.00px;font-size:5.6px;color:#c4c4c4;transform:scaleX(0.8142857142857144);transform-origin:1.5px 0;">Normalize</span>
<div class="a" style="left:899.5px;top:255.3px;width:5.5px;height:5px;background:#2b2b2b;"></div>
<svg class="a" style="left:899.5px;top:255.3px;" width="6" height="5" viewBox="0 0 6 5"><path d="M1 2.5L2.5 4L5 0.8" stroke="#e0e0e0" stroke-width="0.9" fill="none"/></svg>
<span class="t" style="left:906.00px;top:255.80px;font-size:5.6px;color:#c4c4c4;transform:scaleX(0.8142857142857144);transform-origin:1.5px 0;">Cast Shadows</span>
<span class="t" style="right:127.50px;top:265.10px;font-size:5.6px;color:#c4c4c4;transform:scaleX(0.8142857142857144);transform-origin:calc(100% - 1.5px) 0;">Shadow Density</span>
<div class="a" style="left:899px;top:264.1px;width:27.5px;height:6px;background:#2b2b2b;"></div>
<span class="t" style="left:899.50px;top:265.40px;font-size:5.6px;color:#d0d0d0;transform:scaleX(0.8142857142857144);transform-origin:1.5px 0;">1.000</span>
<div class="a" style="left:927px;top:266.6px;width:65px;height:1px;background:#2e2e2e;"></div>
<div class="a" style="left:989.5px;top:264.8px;width:3px;height:4.6px;background:#b8b8b8;border-radius:0.5px"></div>
<svg class="a" style="left:996px;top:264.1px;" width="6" height="6" viewBox="0 0 6 6"><rect x="0" y="0" width="6" height="6" fill="#eee"/><rect x="0.5" y="0.5" width="2.5" height="2.5" fill="#111"/><rect x="3" y="3" width="2.5" height="2.5" fill="#111"/><rect x="3.5" y="0.8" width="1.6" height="1.6" fill="#111"/><rect x="0.8" y="3.5" width="1.6" height="1.6" fill="#111"/></svg>
<span class="t" style="right:127.50px;top:274.20px;font-size:5.6px;color:#c4c4c4;transform:scaleX(0.8142857142857144);transform-origin:calc(100% - 1.5px) 0;">Shadow Color</span>
<div class="a" style="left:899px;top:273.4px;width:27px;height:5.6px;background:#050505;"></div>
<div class="a" style="left:927px;top:275.7px;width:65px;height:1px;background:#2e2e2e;"></div>
<div class="a" style="left:927.5px;top:273.9px;width:3px;height:4.6px;background:#b8b8b8;border-radius:0.5px"></div>
<svg class="a" style="left:996px;top:273.2px;" width="6" height="6" viewBox="0 0 6 6"><rect x="0" y="0" width="6" height="6" fill="#eee"/><rect x="0.5" y="0.5" width="2.5" height="2.5" fill="#111"/><rect x="3" y="3" width="2.5" height="2.5" fill="#111"/><rect x="3.5" y="0.8" width="1.6" height="1.6" fill="#111"/><rect x="0.8" y="3.5" width="1.6" height="1.6" fill="#111"/></svg>
<div class="a" style="left:838px;top:280.5px;width:170px;height:0.6px;background:#4e4e4e;"></div>
<div class="a" style="left:899.5px;top:283.3px;width:5.5px;height:5px;background:#2b2b2b;"></div>
<svg class="a" style="left:899.5px;top:283.3px;" width="6" height="5" viewBox="0 0 6 5"><path d="M1 2.5L2.5 4L5 0.8" stroke="#e0e0e0" stroke-width="0.9" fill="none"/></svg>
<span class="t" style="left:906.00px;top:283.80px;font-size:5.6px;color:#c4c4c4;transform:scaleX(0.8142857142857144);transform-origin:1.5px 0;">Cast Volumetric Shadows</span>
<span class="t" style="right:127.50px;top:292.40px;font-size:5.6px;color:#c4c4c4;transform:scaleX(0.8142857142857144);transform-origin:calc(100% - 1.5px) 0;">Volume Samples</span>
<div class="a" style="left:899px;top:291.4px;width:27.5px;height:6px;background:#2b2b2b;"></div>
<span class="t" style="left:899.50px;top:292.70px;font-size:5.6px;color:#d0d0d0;transform:scaleX(0.8142857142857144);transform-origin:1.5px 0;">2</span>
<div class="a" style="left:927px;top:293.9px;width:65px;height:1px;background:#2e2e2e;"></div>
<div class="a" style="left:940.3px;top:292.09999999999997px;width:3px;height:4.6px;background:#b8b8b8;border-radius:0.5px"></div>
<svg class="a" style="left:996px;top:291.4px;" width="6" height="6" viewBox="0 0 6 6"><rect x="0" y="0" width="6" height="6" fill="#eee"/><rect x="0.5" y="0.5" width="2.5" height="2.5" fill="#111"/><rect x="3" y="3" width="2.5" height="2.5" fill="#111"/><rect x="3.5" y="0.8" width="1.6" height="1.6" fill="#111"/><rect x="0.8" y="3.5" width="1.6" height="1.6" fill="#111"/></svg>
<div class="a" style="left:839px;top:300.6px;width:168px;height:7.5px;background:#585858;"></div>
<div class="a" style="left:839px;top:308px;width:168px;height:60px;background:#4a4a4a;"></div>
<svg class="a" style="left:843px;top:302.8px;" width="5" height="4" viewBox="0 0 5 4"><path d="M0 0.3H4.6L2.3 3Z" fill="#e8e8e8"/></svg>
<span class="t" style="left:850.50px;top:302.40px;font-size:5.6px;color:#e0e0e0;font-weight:bold;transform:scaleX(0.7928571428571428);transform-origin:1.5px 0;">Visibility</span>
<span class="t" style="right:125.10px;top:312.00px;font-size:5.6px;color:#c4c4c4;transform:scaleX(0.8142857142857144);transform-origin:calc(100% - 1.5px) 0;">Diffuse</span>
<div class="a" style="left:901.3px;top:311px;width:27.5px;height:6px;background:#2b2b2b;"></div>
<span class="t" style="left:901.80px;top:312.30px;font-size:5.6px;color:#d0d0d0;transform:scaleX(0.8142857142857144);transform-origin:1.5px 0;">1.000</span>
<div class="a" style="left:929px;top:313.5px;width:61px;height:1px;background:#2e2e2e;"></div>
<div class="a" style="left:988.1px;top:311.7px;width:3px;height:4.6px;background:#b8b8b8;border-radius:0.5px"></div>
<svg class="a" style="left:996px;top:311px;" width="6" height="6" viewBox="0 0 6 6"><rect x="0" y="0" width="6" height="6" fill="#eee"/><rect x="0.5" y="0.5" width="2.5" height="2.5" fill="#111"/><rect x="3" y="3" width="2.5" height="2.5" fill="#111"/><rect x="3.5" y="0.8" width="1.6" height="1.6" fill="#111"/><rect x="0.8" y="3.5" width="1.6" height="1.6" fill="#111"/></svg>
<span class="t" style="right:125.10px;top:321.80px;font-size:5.6px;color:#c4c4c4;transform:scaleX(0.8142857142857144);transform-origin:calc(100% - 1.5px) 0;">Specular</span>
<div class="a" style="left:901.3px;top:320.8px;width:27.5px;height:6px;background:#2b2b2b;"></div>
<span class="t" style="left:901.80px;top:322.10px;font-size:5.6px;color:#d0d0d0;transform:scaleX(0.8142857142857144);transform-origin:1.5px 0;">1.000</span>
<div class="a" style="left:929px;top:323.3px;width:61px;height:1px;background:#2e2e2e;"></div>
<div class="a" style="left:988.1px;top:321.5px;width:3px;height:4.6px;background:#b8b8b8;border-radius:0.5px"></div>
<svg class="a" style="left:996px;top:320.8px;" width="6" height="6" viewBox="0 0 6 6"><rect x="0" y="0" width="6" height="6" fill="#eee"/><rect x="0.5" y="0.5" width="2.5" height="2.5" fill="#111"/><rect x="3" y="3" width="2.5" height="2.5" fill="#111"/><rect x="3.5" y="0.8" width="1.6" height="1.6" fill="#111"/><rect x="0.8" y="3.5" width="1.6" height="1.6" fill="#111"/></svg>
<span class="t" style="right:125.10px;top:331.20px;font-size:5.6px;color:#c4c4c4;transform:scaleX(0.8142857142857144);transform-origin:calc(100% - 1.5px) 0;">SSS</span>
<div class="a" style="left:901.3px;top:330.2px;width:27.5px;height:6px;background:#2b2b2b;"></div>
<span class="t" style="left:901.80px;top:331.50px;font-size:5.6px;color:#d0d0d0;transform:scaleX(0.8142857142857144);transform-origin:1.5px 0;">1.000</span>
<div class="a" style="left:929px;top:332.7px;width:61px;height:1px;background:#2e2e2e;"></div>
<div class="a" style="left:988.1px;top:330.9px;width:3px;height:4.6px;background:#b8b8b8;border-radius:0.5px"></div>
<svg class="a" style="left:996px;top:330.2px;" width="6" height="6" viewBox="0 0 6 6"><rect x="0" y="0" width="6" height="6" fill="#eee"/><rect x="0.5" y="0.5" width="2.5" height="2.5" fill="#111"/><rect x="3" y="3" width="2.5" height="2.5" fill="#111"/><rect x="3.5" y="0.8" width="1.6" height="1.6" fill="#111"/><rect x="0.8" y="3.5" width="1.6" height="1.6" fill="#111"/></svg>
<span class="t" style="right:125.10px;top:341.00px;font-size:5.6px;color:#c4c4c4;transform:scaleX(0.8142857142857144);transform-origin:calc(100% - 1.5px) 0;">Indirect</span>
<div class="a" style="left:901.3px;top:340px;width:27.5px;height:6px;background:#2b2b2b;"></div>
<span class="t" style="left:901.80px;top:341.30px;font-size:5.6px;color:#d0d0d0;transform:scaleX(0.8142857142857144);transform-origin:1.5px 0;">1.000</span>
<div class="a" style="left:929px;top:342.5px;width:61px;height:1px;background:#2e2e2e;"></div>
<div class="a" style="left:988.1px;top:340.7px;width:3px;height:4.6px;background:#b8b8b8;border-radius:0.5px"></div>
<svg class="a" style="left:996px;top:340px;" width="6" height="6" viewBox="0 0 6 6"><rect x="0" y="0" width="6" height="6" fill="#eee"/><rect x="0.5" y="0.5" width="2.5" height="2.5" fill="#111"/><rect x="3" y="3" width="2.5" height="2.5" fill="#111"/><rect x="3.5" y="0.8" width="1.6" height="1.6" fill="#111"/><rect x="0.8" y="3.5" width="1.6" height="1.6" fill="#111"/></svg>
<span class="t" style="right:125.10px;top:350.60px;font-size:5.6px;color:#c4c4c4;transform:scaleX(0.8142857142857144);transform-origin:calc(100% - 1.5px) 0;">Volume</span>
<div class="a" style="left:901.3px;top:349.6px;width:27.5px;height:6px;background:#2b2b2b;"></div>
<span class="t" style="left:901.80px;top:350.90px;font-size:5.6px;color:#d0d0d0;transform:scaleX(0.8142857142857144);transform-origin:1.5px 0;">1.000</span>
<div class="a" style="left:929px;top:352.1px;width:61px;height:1px;background:#2e2e2e;"></div>
<div class="a" style="left:988.1px;top:350.3px;width:3px;height:4.6px;background:#b8b8b8;border-radius:0.5px"></div>
<svg class="a" style="left:996px;top:349.6px;" width="6" height="6" viewBox="0 0 6 6"><rect x="0" y="0" width="6" height="6" fill="#eee"/><rect x="0.5" y="0.5" width="2.5" height="2.5" fill="#111"/><rect x="3" y="3" width="2.5" height="2.5" fill="#111"/><rect x="3.5" y="0.8" width="1.6" height="1.6" fill="#111"/><rect x="0.8" y="3.5" width="1.6" height="1.6" fill="#111"/></svg>
<span class="t" style="right:125.10px;top:360.00px;font-size:5.6px;color:#c4c4c4;transform:scaleX(0.8142857142857144);transform-origin:calc(100% - 1.5px) 0;">Max Bounces</span>
<div class="a" style="left:901.3px;top:359px;width:26.5px;height:6px;background:#2b2b2b;"></div>
<span class="t" style="left:901.80px;top:360.30px;font-size:5.6px;color:#d0d0d0;transform:scaleX(0.8142857142857144);transform-origin:1.5px 0;">999</span>
<svg class="a" style="left:962.5px;top:359px;" width="6" height="6" viewBox="0 0 6 6"><rect x="0" y="0" width="6" height="6" fill="#eee"/><rect x="0.5" y="0.5" width="2.5" height="2.5" fill="#111"/><rect x="3" y="3" width="2.5" height="2.5" fill="#111"/><rect x="3.5" y="0.8" width="1.6" height="1.6" fill="#111"/><rect x="0.8" y="3.5" width="1.6" height="1.6" fill="#111"/></svg>
<div class="a" style="left:838px;top:367.2px;width:170px;height:0.6px;background:#4e4e4e;"></div>
<span class="t" style="right:126.50px;top:371.10px;font-size:5.6px;color:#c4c4c4;transform:scaleX(0.8142857142857144);transform-origin:calc(100% - 1.5px) 0;">AOV Light Group *</span>
<div class="a" style="left:899.5px;top:369.6px;width:104px;height:7px;background:#2b2b2b;"></div>
<span class="t" style="left:900.00px;top:371.30px;font-size:5.6px;color:#e0e0e0;transform:scaleX(0.8142857142857144);transform-origin:1.5px 0;">default</span>
<div class="a" style="left:839px;top:378px;width:168px;height:8px;background:#585858;"></div>
<svg class="a" style="left:843px;top:380.5px;" width="5" height="4" viewBox="0 0 5 4"><path d="M0 0.3H4.6L2.3 3Z" fill="#e8e8e8"/></svg>
<span class="t" style="left:850.50px;top:380.20px;font-size:5.6px;color:#e0e0e0;font-weight:bold;transform:scaleX(0.7928571428571428);transform-origin:1.5px 0;">Light Filters *</span>
<div class="a" style="left:839px;top:386px;width:168px;height:48px;background:#4a4a4a;"></div>
<div class="a" style="left:899.5px;top:388px;width:96px;height:46px;background:#2b2b2b;"></div>
<div class="a" style="left:895px;top:434.5px;width:60px;height:0.6px;background:#5a5a5a;"></div>
<span class="t" style="left:837.50px;top:437.60px;font-size:5.6px;color:#e0e0e0;font-weight:bold;transform:scaleX(0.7714285714285716);transform-origin:1.5px 0;">Notes:  left_wall:aiPhotometricLightShape6</span>
<div class="a" style="left:835px;top:442.3px;width:180px;height:58.8px;background:#2b2b2b;"></div>
<div class="a" style="left:835px;top:503px;width:58px;height:10.6px;background:#575757;"></div>
<span class="t" style="left:864px;top:506.40px;font-size:5.6px;color:#dcdcdc;transform:translateX(-50%) scaleX(0.8142857142857144);transform-origin:50% 0;">Select</span>
<div class="a" style="left:894.5px;top:503px;width:61.5px;height:10.6px;background:#575757;"></div>
<span class="t" style="left:925.2px;top:506.40px;font-size:5.6px;color:#dcdcdc;transform:translateX(-50%) scaleX(0.8142857142857144);transform-origin:50% 0;">Load Attributes</span>
<div class="a" style="left:957px;top:503px;width:59px;height:10.6px;background:#575757;"></div>
<span class="t" style="left:986.5px;top:506.40px;font-size:5.6px;color:#dcdcdc;transform:translateX(-50%) scaleX(0.8142857142857144);transform-origin:50% 0;">Copy Tab</span>
<div class="a" style="left:1017px;top:59px;width:7px;height:456px;background:#3a3a3a;"></div>
<div class="a" style="left:1017px;top:123.5px;width:7px;height:39px;background:#444444;"></div>
<span class="t" style="left:1020.5px;top:91.4px;font-size:6px;color:#9a9a9a;transform:translate(-50%,-50%) rotate(90deg) scaleX(0.77);transform-origin:50% 50%;">Channel Box / Layer Editor</span>
<span class="t" style="left:1020.5px;top:143.3px;font-size:6px;color:#e0e0e0;font-weight:bold;transform:translate(-50%,-50%) rotate(90deg) scaleX(0.77);transform-origin:50% 50%;">Attribute Editor</span>
<span class="t" style="left:1020.5px;top:189.2px;font-size:6px;color:#8a8a8a;transform:translate(-50%,-50%) rotate(90deg) scaleX(0.77);transform-origin:50% 50%;">Modeling Toolkit</span>
<span class="t" style="left:1020.5px;top:221px;font-size:6px;color:#8a8a8a;transform:translate(-50%,-50%) rotate(90deg) scaleX(0.77);transform-origin:50% 50%;">Human IK</span>
<div class="a" style="left:1017px;top:122.7px;width:7px;height:0.8px;background:#4a4a4a;"></div>
<div class="a" style="left:1017px;top:162.5px;width:7px;height:0.8px;background:#4a4a4a;"></div>
<div class="a" style="left:1017px;top:211.5px;width:7px;height:0.8px;background:#4a4a4a;"></div>
<div class="a" style="left:1017px;top:231px;width:7px;height:0.8px;background:#4a4a4a;"></div>
<div class="a" style="left:0px;top:515px;width:1024px;height:2.3px;background:#3a3a3a;"></div>
<div class="a" style="left:0px;top:517.3px;width:1024px;height:13px;background:#444444;"></div>
<div class="a" style="left:5px;top:517.9px;width:901px;height:12.1px;background:#2b2b2b;"></div>
<div class="a" style="left:1px;top:517.5px;width:2px;height:13px;background:#3a3a3a;"></div>
<svg class="a" style="left:0;top:0" width="1024" height="561" viewBox="0 0 1024 561"><rect x="9.10" y="523.4" width="0.7" height="5.1" fill="#8e8e8e"/><rect x="20.98" y="523.4" width="0.7" height="5.1" fill="#8e8e8e"/><rect x="32.86" y="523.4" width="0.7" height="5.1" fill="#8e8e8e"/><rect x="44.74" y="523.4" width="0.7" height="5.1" fill="#8e8e8e"/><rect x="56.63" y="523.4" width="0.7" height="5.1" fill="#8e8e8e"/><rect x="68.51" y="523.4" width="0.7" height="5.1" fill="#8e8e8e"/><rect x="80.39" y="523.4" width="0.7" height="5.1" fill="#8e8e8e"/><rect x="92.27" y="523.4" width="0.7" height="5.1" fill="#8e8e8e"/><rect x="104.15" y="523.4" width="0.7" height="5.1" fill="#8e8e8e"/><rect x="116.03" y="523.4" width="0.7" height="5.1" fill="#8e8e8e"/><rect x="127.91" y="523.4" width="0.7" height="5.1" fill="#8e8e8e"/><rect x="139.79" y="523.4" width="0.7" height="5.1" fill="#8e8e8e"/><rect x="151.68" y="523.4" width="0.7" height="5.1" fill="#8e8e8e"/><rect x="163.56" y="523.4" width="0.7" height="5.1" fill="#8e8e8e"/><rect x="175.44" y="523.4" width="0.7" height="5.1" fill="#8e8e8e"/><rect x="187.32" y="523.4" width="0.7" height="5.1" fill="#8e8e8e"/><rect x="199.20" y="523.4" width="0.7" height="5.1" fill="#8e8e8e"/><rect x="211.08" y="523.4" width="0.7" height="5.1" fill="#8e8e8e"/><rect x="222.96" y="523.4" width="0.7" height="5.1" fill="#8e8e8e"/><rect x="234.85" y="523.4" width="0.7" height="5.1" fill="#8e8e8e"/><rect x="246.73" y="523.4" width="0.7" height="5.1" fill="#8e8e8e"/><rect x="258.61" y="523.4" width="0.7" height="5.1" fill="#8e8e8e"/><rect x="270.49" y="523.4" width="0.7" height="5.1" fill="#8e8e8e"/><rect x="282.37" y="523.4" width="0.7" height="5.1" fill="#8e8e8e"/><rect x="294.25" y="523.4" width="0.7" height="5.1" fill="#8e8e8e"/><rect x="306.13" y="523.4" width="0.7" height="5.1" fill="#8e8e8e"/><rect x="318.01" y="523.4" width="0.7" height="5.1" fill="#8e8e8e"/><rect x="329.90" y="523.4" width="0.7" height="5.1" fill="#8e8e8e"/><rect x="341.78" y="523.4" width="0.7" height="5.1" fill="#8e8e8e"/><rect x="353.66" y="523.4" width="0.7" height="5.1" fill="#8e8e8e"/><rect x="365.54" y="523.4" width="0.7" height="5.1" fill="#8e8e8e"/><rect x="377.42" y="523.4" width="0.7" height="5.1" fill="#8e8e8e"/><rect x="389.30" y="523.4" width="0.7" height="5.1" fill="#8e8e8e"/><rect x="401.18" y="523.4" width="0.7" height="5.1" fill="#8e8e8e"/><rect x="413.07" y="523.4" width="0.7" height="5.1" fill="#8e8e8e"/><rect x="424.95" y="523.4" width="0.7" height="5.1" fill="#8e8e8e"/><rect x="436.83" y="523.4" width="0.7" height="5.1" fill="#8e8e8e"/><rect x="448.71" y="523.4" width="0.7" height="5.1" fill="#8e8e8e"/><rect x="460.59" y="523.4" width="0.7" height="5.1" fill="#8e8e8e"/><rect x="472.47" y="523.4" width="0.7" height="5.1" fill="#8e8e8e"/><rect x="484.35" y="523.4" width="0.7" height="5.1" fill="#8e8e8e"/><rect x="496.23" y="523.4" width="0.7" height="5.1" fill="#8e8e8e"/><rect x="508.12" y="523.4" width="0.7" height="5.1" fill="#8e8e8e"/><rect x="520.00" y="523.4" width="0.7" height="5.1" fill="#8e8e8e"/><rect x="531.88" y="523.4" width="0.7" height="5.1" fill="#8e8e8e"/><rect x="543.76" y="523.4" width="0.7" height="5.1" fill="#8e8e8e"/><rect x="555.64" y="523.4" width="0.7" height="5.1" fill="#8e8e8e"/><rect x="567.52" y="523.4" width="0.7" height="5.1" fill="#8e8e8e"/><rect x="579.40" y="523.4" width="0.7" height="5.1" fill="#8e8e8e"/><rect x="591.29" y="523.4" width="0.7" height="5.1" fill="#8e8e8e"/><rect x="603.17" y="523.4" width="0.7" height="5.1" fill="#8e8e8e"/><rect x="615.05" y="523.4" width="0.7" height="5.1" fill="#8e8e8e"/><rect x="626.93" y="523.4" width="0.7" height="5.1" fill="#8e8e8e"/><rect x="638.81" y="523.4" width="0.7" height="5.1" fill="#8e8e8e"/><rect x="650.69" y="523.4" width="0.7" height="5.1" fill="#8e8e8e"/><rect x="662.57" y="523.4" width="0.7" height="5.1" fill="#8e8e8e"/><rect x="674.45" y="523.4" width="0.7" height="5.1" fill="#8e8e8e"/><rect x="686.34" y="523.4" width="0.7" height="5.1" fill="#8e8e8e"/><rect x="698.22" y="523.4" width="0.7" height="5.1" fill="#8e8e8e"/><rect x="710.10" y="523.4" width="0.7" height="5.1" fill="#8e8e8e"/><rect x="721.98" y="523.4" width="0.7" height="5.1" fill="#8e8e8e"/><rect x="733.86" y="523.4" width="0.7" height="5.1" fill="#8e8e8e"/><rect x="745.74" y="523.4" width="0.7" height="5.1" fill="#8e8e8e"/><rect x="757.62" y="523.4" width="0.7" height="5.1" fill="#8e8e8e"/><rect x="769.51" y="523.4" width="0.7" height="5.1" fill="#8e8e8e"/><rect x="781.39" y="523.4" width="0.7" height="5.1" fill="#8e8e8e"/><rect x="793.27" y="523.4" width="0.7" height="5.1" fill="#8e8e8e"/><rect x="805.15" y="523.4" width="0.7" height="5.1" fill="#8e8e8e"/><rect x="817.03" y="523.4" width="0.7" height="5.1" fill="#8e8e8e"/><rect x="828.91" y="523.4" width="0.7" height="5.1" fill="#8e8e8e"/><rect x="840.79" y="523.4" width="0.7" height="5.1" fill="#8e8e8e"/><rect x="852.67" y="523.4" width="0.7" height="5.1" fill="#8e8e8e"/><rect x="864.56" y="523.4" width="0.7" height="5.1" fill="#8e8e8e"/><rect x="876.44" y="523.4" width="0.7" height="5.1" fill="#8e8e8e"/><rect x="888.32" y="523.4" width="0.7" height="5.1" fill="#8e8e8e"/><rect x="900.20" y="523.4" width="0.7" height="5.1" fill="#8e8e8e"/></svg>
<div class="a" style="left:5px;top:517px;width:901px;height:6.5px;overflow:hidden">
<span class="t" style="left:3.10px;top:2.30px;font-size:4.6px;color:#8c8c8c;transform:scaleX(0.9);transform-origin:1.5px 0;">850</span>
<span class="t" style="left:14.98px;top:2.30px;font-size:4.6px;color:#8c8c8c;transform:scaleX(0.9);transform-origin:1.5px 0;">860</span>
<span class="t" style="left:26.86px;top:2.30px;font-size:4.6px;color:#8c8c8c;transform:scaleX(0.9);transform-origin:1.5px 0;">870</span>
<span class="t" style="left:38.74px;top:2.30px;font-size:4.6px;color:#8c8c8c;transform:scaleX(0.9);transform-origin:1.5px 0;">880</span>
<span class="t" style="left:50.63px;top:2.30px;font-size:4.6px;color:#8c8c8c;transform:scaleX(0.9);transform-origin:1.5px 0;">890</span>
<span class="t" style="left:62.51px;top:2.30px;font-size:4.6px;color:#8c8c8c;transform:scaleX(0.9);transform-origin:1.5px 0;">900</span>
<span class="t" style="left:74.39px;top:2.30px;font-size:4.6px;color:#8c8c8c;transform:scaleX(0.9);transform-origin:1.5px 0;">910</span>
<span class="t" style="left:86.27px;top:2.30px;font-size:4.6px;color:#8c8c8c;transform:scaleX(0.9);transform-origin:1.5px 0;">920</span>
<span class="t" style="left:98.15px;top:2.30px;font-size:4.6px;color:#8c8c8c;transform:scaleX(0.9);transform-origin:1.5px 0;">930</span>
<span class="t" style="left:110.03px;top:2.30px;font-size:4.6px;color:#8c8c8c;transform:scaleX(0.9);transform-origin:1.5px 0;">940</span>
<span class="t" style="left:121.91px;top:2.30px;font-size:4.6px;color:#8c8c8c;transform:scaleX(0.9);transform-origin:1.5px 0;">950</span>
<span class="t" style="left:133.79px;top:2.30px;font-size:4.6px;color:#8c8c8c;transform:scaleX(0.9);transform-origin:1.5px 0;">960</span>
<span class="t" style="left:145.68px;top:2.30px;font-size:4.6px;color:#8c8c8c;transform:scaleX(0.9);transform-origin:1.5px 0;">970</span>
<span class="t" style="left:157.56px;top:2.30px;font-size:4.6px;color:#8c8c8c;transform:scaleX(0.9);transform-origin:1.5px 0;">980</span>
<span class="t" style="left:169.44px;top:2.30px;font-size:4.6px;color:#8c8c8c;transform:scaleX(0.9);transform-origin:1.5px 0;">990</span>
<span class="t" style="left:181.32px;top:2.30px;font-size:4.6px;color:#8c8c8c;transform:scaleX(0.9);transform-origin:1.5px 0;">1000</span>
<span class="t" style="left:193.20px;top:2.30px;font-size:4.6px;color:#8c8c8c;transform:scaleX(0.9);transform-origin:1.5px 0;">1010</span>
<span class="t" style="left:205.08px;top:2.30px;font-size:4.6px;color:#8c8c8c;transform:scaleX(0.9);transform-origin:1.5px 0;">1020</span>
<span class="t" style="left:216.96px;top:2.30px;font-size:4.6px;color:#8c8c8c;transform:scaleX(0.9);transform-origin:1.5px 0;">1030</span>
<span class="t" style="left:228.85px;top:2.30px;font-size:4.6px;color:#8c8c8c;transform:scaleX(0.9);transform-origin:1.5px 0;">1040</span>
<span class="t" style="left:240.73px;top:2.30px;font-size:4.6px;color:#8c8c8c;transform:scaleX(0.9);transform-origin:1.5px 0;">1050</span>
<span class="t" style="left:252.61px;top:2.30px;font-size:4.6px;color:#8c8c8c;transform:scaleX(0.9);transform-origin:1.5px 0;">1060</span>
<span class="t" style="left:264.49px;top:2.30px;font-size:4.6px;color:#8c8c8c;transform:scaleX(0.9);transform-origin:1.5px 0;">1070</span>
<span class="t" style="left:276.37px;top:2.30px;font-size:4.6px;color:#8c8c8c;transform:scaleX(0.9);transform-origin:1.5px 0;">1080</span>
<span class="t" style="left:288.25px;top:2.30px;font-size:4.6px;color:#8c8c8c;transform:scaleX(0.9);transform-origin:1.5px 0;">1090</span>
<span class="t" style="left:300.13px;top:2.30px;font-size:4.6px;color:#8c8c8c;transform:scaleX(0.9);transform-origin:1.5px 0;">1100</span>
<span class="t" style="left:312.01px;top:2.30px;font-size:4.6px;color:#8c8c8c;transform:scaleX(0.9);transform-origin:1.5px 0;">1110</span>
<span class="t" style="left:323.90px;top:2.30px;font-size:4.6px;color:#8c8c8c;transform:scaleX(0.9);transform-origin:1.5px 0;">1120</span>
<span class="t" style="left:335.78px;top:2.30px;font-size:4.6px;color:#8c8c8c;transform:scaleX(0.9);transform-origin:1.5px 0;">1130</span>
<span class="t" style="left:347.66px;top:2.30px;font-size:4.6px;color:#8c8c8c;transform:scaleX(0.9);transform-origin:1.5px 0;">1140</span>
<span class="t" style="left:359.54px;top:2.30px;font-size:4.6px;color:#8c8c8c;transform:scaleX(0.9);transform-origin:1.5px 0;">1150</span>
<span class="t" style="left:371.42px;top:2.30px;font-size:4.6px;color:#8c8c8c;transform:scaleX(0.9);transform-origin:1.5px 0;">1160</span>
<span class="t" style="left:383.30px;top:2.30px;font-size:4.6px;color:#8c8c8c;transform:scaleX(0.9);transform-origin:1.5px 0;">1170</span>
<span class="t" style="left:395.18px;top:2.30px;font-size:4.6px;color:#8c8c8c;transform:scaleX(0.9);transform-origin:1.5px 0;">1180</span>
<span class="t" style="left:407.07px;top:2.30px;font-size:4.6px;color:#8c8c8c;transform:scaleX(0.9);transform-origin:1.5px 0;">1190</span>
<span class="t" style="left:418.95px;top:2.30px;font-size:4.6px;color:#8c8c8c;transform:scaleX(0.9);transform-origin:1.5px 0;">1200</span>
<span class="t" style="left:430.83px;top:2.30px;font-size:4.6px;color:#8c8c8c;transform:scaleX(0.9);transform-origin:1.5px 0;">1210</span>
<span class="t" style="left:442.71px;top:2.30px;font-size:4.6px;color:#8c8c8c;transform:scaleX(0.9);transform-origin:1.5px 0;">1220</span>
<span class="t" style="left:454.59px;top:2.30px;font-size:4.6px;color:#8c8c8c;transform:scaleX(0.9);transform-origin:1.5px 0;">1230</span>
<span class="t" style="left:466.47px;top:2.30px;font-size:4.6px;color:#8c8c8c;transform:scaleX(0.9);transform-origin:1.5px 0;">1240</span>
<span class="t" style="left:478.35px;top:2.30px;font-size:4.6px;color:#8c8c8c;transform:scaleX(0.9);transform-origin:1.5px 0;">1250</span>
<span class="t" style="left:490.23px;top:2.30px;font-size:4.6px;color:#8c8c8c;transform:scaleX(0.9);transform-origin:1.5px 0;">1260</span>
<span class="t" style="left:502.12px;top:2.30px;font-size:4.6px;color:#8c8c8c;transform:scaleX(0.9);transform-origin:1.5px 0;">1270</span>
<span class="t" style="left:514.00px;top:2.30px;font-size:4.6px;color:#8c8c8c;transform:scaleX(0.9);transform-origin:1.5px 0;">1280</span>
<span class="t" style="left:525.88px;top:2.30px;font-size:4.6px;color:#8c8c8c;transform:scaleX(0.9);transform-origin:1.5px 0;">1290</span>
<span class="t" style="left:537.76px;top:2.30px;font-size:4.6px;color:#8c8c8c;transform:scaleX(0.9);transform-origin:1.5px 0;">1300</span>
<span class="t" style="left:549.64px;top:2.30px;font-size:4.6px;color:#8c8c8c;transform:scaleX(0.9);transform-origin:1.5px 0;">1310</span>
<span class="t" style="left:561.52px;top:2.30px;font-size:4.6px;color:#8c8c8c;transform:scaleX(0.9);transform-origin:1.5px 0;">1320</span>
<span class="t" style="left:573.40px;top:2.30px;font-size:4.6px;color:#8c8c8c;transform:scaleX(0.9);transform-origin:1.5px 0;">1330</span>
<span class="t" style="left:585.29px;top:2.30px;font-size:4.6px;color:#8c8c8c;transform:scaleX(0.9);transform-origin:1.5px 0;">1340</span>
<span class="t" style="left:597.17px;top:2.30px;font-size:4.6px;color:#8c8c8c;transform:scaleX(0.9);transform-origin:1.5px 0;">1350</span>
<span class="t" style="left:609.05px;top:2.30px;font-size:4.6px;color:#8c8c8c;transform:scaleX(0.9);transform-origin:1.5px 0;">1360</span>
<span class="t" style="left:620.93px;top:2.30px;font-size:4.6px;color:#8c8c8c;transform:scaleX(0.9);transform-origin:1.5px 0;">1370</span>
<span class="t" style="left:632.81px;top:2.30px;font-size:4.6px;color:#8c8c8c;transform:scaleX(0.9);transform-origin:1.5px 0;">1380</span>
<span class="t" style="left:644.69px;top:2.30px;font-size:4.6px;color:#8c8c8c;transform:scaleX(0.9);transform-origin:1.5px 0;">1390</span>
<span class="t" style="left:656.57px;top:2.30px;font-size:4.6px;color:#8c8c8c;transform:scaleX(0.9);transform-origin:1.5px 0;">1400</span>
<span class="t" style="left:668.45px;top:2.30px;font-size:4.6px;color:#8c8c8c;transform:scaleX(0.9);transform-origin:1.5px 0;">1410</span>
<span class="t" style="left:680.34px;top:2.30px;font-size:4.6px;color:#8c8c8c;transform:scaleX(0.9);transform-origin:1.5px 0;">1420</span>
<span class="t" style="left:692.22px;top:2.30px;font-size:4.6px;color:#8c8c8c;transform:scaleX(0.9);transform-origin:1.5px 0;">1430</span>
<span class="t" style="left:704.10px;top:2.30px;font-size:4.6px;color:#8c8c8c;transform:scaleX(0.9);transform-origin:1.5px 0;">1440</span>
<span class="t" style="left:715.98px;top:2.30px;font-size:4.6px;color:#8c8c8c;transform:scaleX(0.9);transform-origin:1.5px 0;">1450</span>
<span class="t" style="left:727.86px;top:2.30px;font-size:4.6px;color:#8c8c8c;transform:scaleX(0.9);transform-origin:1.5px 0;">1460</span>
<span class="t" style="left:739.74px;top:2.30px;font-size:4.6px;color:#8c8c8c;transform:scaleX(0.9);transform-origin:1.5px 0;">1470</span>
<span class="t" style="left:751.62px;top:2.30px;font-size:4.6px;color:#8c8c8c;transform:scaleX(0.9);transform-origin:1.5px 0;">1480</span>
<span class="t" style="left:763.51px;top:2.30px;font-size:4.6px;color:#8c8c8c;transform:scaleX(0.9);transform-origin:1.5px 0;">1490</span>
<span class="t" style="left:775.39px;top:2.30px;font-size:4.6px;color:#8c8c8c;transform:scaleX(0.9);transform-origin:1.5px 0;">1500</span>
<span class="t" style="left:787.27px;top:2.30px;font-size:4.6px;color:#8c8c8c;transform:scaleX(0.9);transform-origin:1.5px 0;">1510</span>
<span class="t" style="left:799.15px;top:2.30px;font-size:4.6px;color:#8c8c8c;transform:scaleX(0.9);transform-origin:1.5px 0;">1520</span>
<span class="t" style="left:811.03px;top:2.30px;font-size:4.6px;color:#8c8c8c;transform:scaleX(0.9);transform-origin:1.5px 0;">1530</span>
<span class="t" style="left:822.91px;top:2.30px;font-size:4.6px;color:#8c8c8c;transform:scaleX(0.9);transform-origin:1.5px 0;">1540</span>
<span class="t" style="left:834.79px;top:2.30px;font-size:4.6px;color:#8c8c8c;transform:scaleX(0.9);transform-origin:1.5px 0;">1550</span>
<span class="t" style="left:846.67px;top:2.30px;font-size:4.6px;color:#8c8c8c;transform:scaleX(0.9);transform-origin:1.5px 0;">1560</span>
<span class="t" style="left:858.56px;top:2.30px;font-size:4.6px;color:#8c8c8c;transform:scaleX(0.9);transform-origin:1.5px 0;">1570</span>
<span class="t" style="left:870.44px;top:2.30px;font-size:4.6px;color:#8c8c8c;transform:scaleX(0.9);transform-origin:1.5px 0;">1580</span>
<span class="t" style="left:882.32px;top:2.30px;font-size:4.6px;color:#8c8c8c;transform:scaleX(0.9);transform-origin:1.5px 0;">1590</span>
<span class="t" style="left:894.20px;top:2.30px;font-size:4.6px;color:#8c8c8c;transform:scaleX(0.9);transform-origin:1.5px 0;">1600</span>
</div>
<div class="a" style="left:9.4px;top:528.8px;width:892.3px;height:1.5px;background:#cdb870;"></div>
<div class="a" style="left:862.3px;top:528.8px;width:17.5px;height:1.5px;background:#4a8cc0;"></div>
<div class="a" style="left:876.2px;top:522px;width:0.8px;height:6.5px;background:#d8d8d8;"></div>
<span class="t" style="left:869.10px;top:523.10px;font-size:5px;color:#d8d8d8;transform:scaleX(0.9);transform-origin:1.5px 0;">1575</span>
<div class="a" style="left:908.6px;top:520.7px;width:35.2px;height:6.8px;background:#2b2b2b;"></div>
<span class="t" style="left:909.00px;top:522.20px;font-size:5.6px;color:#aaaaaa;transform:scaleX(0.8142857142857144);transform-origin:1.5px 0;">1575</span>
<svg class="a" style="left:948px;top:519px;" width="72" height="10" viewBox="0 0 72 10"><path d="M1 2V8M4.5 2L2 5L4.5 8ZM7.5 2L5 5L7.5 8Z" fill="#cfcfcf" stroke="#cfcfcf" stroke-width="0.6"/><path d="M11 2V8" stroke="#cfcfcf" stroke-width="0.8"/><path d="M15 2L12 5L15 8Z" fill="#cfcfcf"/><path d="M21 2V8" stroke="#e07a2a" stroke-width="0.8"/><path d="M25 2L22 5L25 8Z" fill="#cfcfcf"/><path d="M35 1.5L31 5L35 8.5Z" fill="#cfcfcf"/><path d="M39 1.5L43 5L39 8.5Z" fill="#cfcfcf"/><path d="M47 2L50 5L47 8Z" fill="#cfcfcf"/><path d="M51 2V8" stroke="#e07a2a" stroke-width="0.8"/><path d="M56 2L59 5L56 8Z" fill="#cfcfcf"/><path d="M60 2V8" stroke="#cfcfcf" stroke-width="0.8"/><path d="M64 2L66.5 5L64 8ZM67 2L69.5 5L67 8ZM70.5 2V8" fill="#cfcfcf" stroke="#cfcfcf" stroke-width="0.6"/></svg>
<div class="a" style="left:0px;top:530.2px;width:1024px;height:15.3px;background:#3c3c3c;"></div>
<div class="a" style="left:6px;top:534.8px;width:34.6px;height:9.3px;background:#2d2d2d;"></div>
<span class="t" style="left:6.50px;top:537.50px;font-size:5.6px;color:#bbbbbb;transform:scaleX(0.8142857142857144);transform-origin:1.5px 0;">1</span>
<div class="a" style="left:44px;top:534.8px;width:35px;height:9.3px;background:#2d2d2d;"></div>
<span class="t" style="left:44.50px;top:537.50px;font-size:5.6px;color:#bbbbbb;transform:scaleX(0.8142857142857144);transform-origin:1.5px 0;">850</span>
<div class="a" style="left:82px;top:534.9px;width:324px;height:9.6px;background:#404040;"></div>
<div class="a" style="left:406px;top:535.5px;width:296px;height:7.5px;background:#5c5c5c;"></div>
<div class="a" style="left:406.5px;top:536.2px;width:7px;height:6px;background:#a0a0a0;"></div>
<span class="t" style="left:414.50px;top:537.30px;font-size:5.6px;color:#c8c8c8;transform:scaleX(0.8142857142857144);transform-origin:1.5px 0;">850</span>
<div class="a" style="left:696.4px;top:536.2px;width:5.2px;height:6px;background:#a0a0a0;"></div>
<span class="t" style="right:328.50px;top:537.30px;font-size:5.6px;color:#c8c8c8;transform:scaleX(0.8142857142857144);transform-origin:calc(100% - 1.5px) 0;">1600</span>
<div class="a" style="left:709px;top:534.9px;width:35px;height:9.3px;background:#2d2d2d;"></div>
<span class="t" style="left:710.00px;top:537.60px;font-size:5.6px;color:#bbbbbb;transform:scaleX(0.8142857142857144);transform-origin:1.5px 0;">1600</span>
<div class="a" style="left:747.5px;top:534.9px;width:35px;height:9.3px;background:#2d2d2d;"></div>
<span class="t" style="left:748.50px;top:537.60px;font-size:5.6px;color:#bbbbbb;transform:scaleX(0.8142857142857144);transform-origin:1.5px 0;">1600</span>
<div class="a" style="left:784.8px;top:536px;width:1px;height:7px;background:#777;"></div>
<svg class="a" style="left:790.5px;top:535px;" width="6" height="8" viewBox="0 0 6 8"><path d="M1 0.5V7.5" stroke="#e07a2a" stroke-width="1"/><path d="M1 1H5L4 2.5L5 4H1Z" fill="#e07a2a"/></svg>
<div class="a" style="left:802.8px;top:536px;width:1px;height:7px;background:#777;"></div>
<svg class="a" style="left:807.8px;top:538px;" width="4" height="3" viewBox="0 0 4 3"><path d="M0 0H3.6L1.8 2Z" fill="#999"/></svg>
<div class="a" style="left:816px;top:534.9px;width:38.6px;height:9.3px;background:#3d3d3d;"></div>
<span class="t" style="left:816.50px;top:537.60px;font-size:5.6px;color:#bdbdbd;transform:scaleX(0.7714285714285716);transform-origin:1.5px 0;">No Character Set</span>
<svg class="a" style="left:859.6px;top:538px;" width="4" height="3" viewBox="0 0 4 3"><path d="M0 0H3.6L1.8 2Z" fill="#999"/></svg>
<div class="a" style="left:867px;top:534.9px;width:39px;height:9.3px;background:#3d3d3d;"></div>
<span class="t" style="left:867.50px;top:537.60px;font-size:5.6px;color:#bdbdbd;transform:scaleX(0.7714285714285716);transform-origin:1.5px 0;">No Anim Layer</span>
<div class="a" style="left:911px;top:536px;width:1px;height:7px;background:#777;"></div>
<div class="a" style="left:917px;top:534.9px;width:37.5px;height:9.3px;background:#555;"></div>
<div class="a" style="left:948px;top:534.9px;width:6.5px;height:9.3px;background:#5c5c5c;"></div>
<span class="t" style="left:917.50px;top:537.60px;font-size:5.6px;color:#aaaaaa;transform:scaleX(0.8142857142857144);transform-origin:1.5px 0;">24 fps</span>
<svg class="a" style="left:949.5px;top:538px;" width="4" height="3" viewBox="0 0 4 3"><path d="M0 0H3.6L1.8 2Z" fill="#ddd"/></svg>
<svg class="a" style="left:960px;top:535px;" width="8" height="8" viewBox="0 0 8 8"><path d="M1.5 5.5A2.5 2 0 0 1 4 1.5H6.5M6.5 2.5A2.5 2 0 0 1 4 6.5H1.5" stroke="#ccc" stroke-width="0.8" fill="none"/></svg>
<div class="a" style="left:970.6px;top:534.5px;width:9.4px;height:9.6px;background:#3b7bb0;"></div>
<svg class="a" style="left:971px;top:535.5px;" width="8.5" height="8" viewBox="0 0 8.5 8"><circle cx="4.2" cy="4" r="3" fill="#d8c830"/><path d="M2.5 4H6" stroke="#333" stroke-width="0.8"/></svg>
<div class="a" style="left:984.5px;top:536px;width:1px;height:7px;background:#777;"></div>
<svg class="a" style="left:989px;top:535.5px;" width="8" height="8" viewBox="0 0 8 8"><path d="M0.5 3H2.5L4.5 1V7L2.5 5H0.5Z" fill="#bbb"/><path d="M5.5 2.5Q7 4 5.5 5.5" stroke="#bbb" stroke-width="0.5" fill="none"/></svg>
<svg class="a" style="left:999px;top:535px;" width="9" height="9" viewBox="0 0 9 9"><circle cx="4.5" cy="4.5" r="3.5" fill="none" stroke="#bbb" stroke-width="0.7" stroke-dasharray="3 1"/><path d="M4.5 2.5V5" stroke="#e07a2a" stroke-width="1"/></svg>
<svg class="a" style="left:1012px;top:535px;" width="9" height="9" viewBox="0 0 9 9"><path d="M2 6.5L4 3.5L7 5.5M4 3.5L5 1.5" stroke="#e07a2a" stroke-width="1.3" fill="none"/><circle cx="2" cy="2" r="1.2" fill="none" stroke="#bbb" stroke-width="0.6"/></svg>
<div class="a" style="left:0px;top:545.5px;width:1024px;height:13.8px;background:#444444;"></div>
<div class="a" style="left:0px;top:545.5px;width:436px;height:13.5px;background:#3e3e3e;"></div>
<div class="a" style="left:436px;top:546px;width:1px;height:13px;background:#4a4a4a;"></div>
<svg class="a" style="left:6px;top:550.9px;" width="7" height="7" viewBox="0 0 7 7"><circle cx="3" cy="3.5" r="2.8" fill="#8dc63f"/><text x="3" y="5.5" font-family="Liberation Sans" font-size="5" font-weight="bold" fill="#2a2a2a" text-anchor="middle">?</text></svg>
<span class="t" style="left:13.50px;top:552.20px;font-size:5.6px;color:#d0d0d0;transform:scaleX(0.6964285714285715);transform-origin:1.5px 0;">Select Tool: select an object</span>
<span class="t" style="left:443.50px;top:551.50px;font-size:5.6px;color:#d8d8d8;font-weight:bold;transform:scaleX(0.7928571428571428);transform-origin:1.5px 0;">MEL</span>
<div class="a" style="left:459px;top:549.6px;width:223.5px;height:8.6px;background:#2b2b2b;"></div>
<div class="a" style="left:683px;top:549.6px;width:2px;height:8.6px;background:#555;"></div>
<div class="a" style="left:686px;top:549.6px;width:324px;height:8.6px;background:#2b2b2b;"></div>
<svg class="a" style="left:1015px;top:549px;" width="8" height="9" viewBox="0 0 8 9"><rect x="0.5" y="1" width="6.5" height="6.5" fill="none" stroke="#bbb" stroke-width="0.6"/><path d="M1.5 3H6M1.5 4.5H6M1.5 6H6" stroke="#bbb" stroke-width="0.5"/></svg>
<div class="a" style="left:0px;top:559.3px;width:1024px;height:1.7px;background:#26394a;"></div>
<div class="a" style="left:19px;top:559.3px;width:115px;height:1.7px;background:#e8e8e8;"></div>
<div class="a" style="left:0px;top:530.2px;width:4px;height:15.3px;background:#444;"></div>
<div class="a" style="left:256px;top:559.3px;width:15.5px;height:1.7px;background:#c87a3a;"></div>
<div class="a" style="left:271.5px;top:559.3px;width:19.5px;height:1.7px;background:#8a9aa8;"></div></body></html>
